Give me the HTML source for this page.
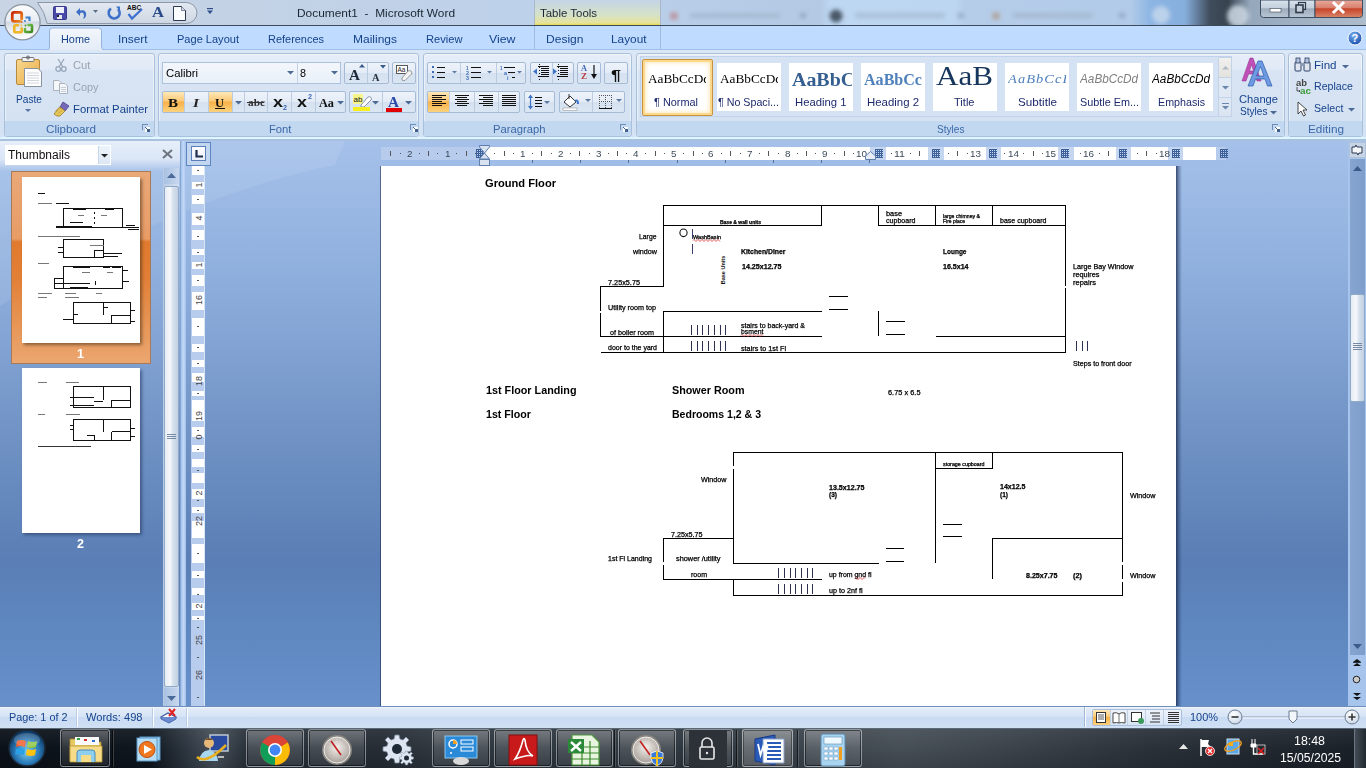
<!DOCTYPE html>
<html><head><meta charset="utf-8"><style>
*{box-sizing:border-box}
html,body{margin:0;padding:0;width:1366px;height:768px;overflow:hidden;position:relative;font-family:"Liberation Sans",sans-serif;background:#6a8fc6}
.a{position:absolute}
.t{position:absolute;white-space:nowrap;transform-origin:0 0}
svg{position:absolute;overflow:visible}
.grp{position:absolute;top:53px;height:84px;border:1px solid #a9c0dc;border-radius:3px;background:linear-gradient(#e5edf8 0,#e1eaf6 15px,#d8e4f3 17px,#d5e2f2 68px);box-shadow:inset 0 0 0 1px rgba(255,255,255,.45)}
.glab{position:absolute;left:0;right:0;bottom:0;height:15px;background:#c2d8f0;border-radius:0 0 3px 3px}
.btnbox{position:absolute;border:1px solid #a6bcd6;border-radius:2px;background:linear-gradient(#eef3fa 0,#e3ebf6 50%,#d5e1f0 51%,#dbe6f3 100%)}
.sel{background:linear-gradient(#fde8b8 0,#fbc977 45%,#f8b048 50%,#fbd27d 100%)}
.sty{position:absolute;top:63px;width:64px;height:48px;background:#fff}
.ln{position:absolute;background:#000}
.tb{position:absolute;top:729px;height:38px;border-radius:3px;border:1px solid rgba(210,220,230,.45);background:linear-gradient(rgba(255,255,255,.3),rgba(255,255,255,.14) 50%,rgba(255,255,255,.08));box-shadow:inset 0 0 0 1px rgba(0,0,0,.5)}

</style></head><body>
<div class="a" style="left:0px;top:0px;width:1366px;height:25px;background:linear-gradient(90deg,#c8d4e3 0px,#c3d2e5 250px,#bdd1ea 520px,#b9cfe9 660px,#b4cae4 820px,#bdd6f1 830px,#bcd5f0 955px,#b5cde9 965px,#b2cbe8 1130px,#8db6e4 1150px,#86aedc 1185px,#3f4c5b 1210px,#37434f 1228px,#95a8bc 1250px,#aebdcc 1366px)"></div>
<svg style="left:0;top:0" width="1366" height="25"><defs><filter id="bl" x="-50%" y="-50%" width="200%" height="200%"><feGaussianBlur stdDeviation="2"/></filter></defs><g filter="url(#bl)"><circle cx="836" cy="16" r="6.5" fill="#4a5868"/><rect x="690" y="13" width="90" height="5" fill="#9fb3ca" opacity=".7"/><rect x="855" y="13" width="90" height="5" fill="#a3b8d0" opacity=".7"/><rect x="1013" y="13" width="80" height="5" fill="#9fb3ca" opacity=".7"/><circle cx="674" cy="16" r="4" fill="#c07070" opacity=".6"/><circle cx="996" cy="16" r="4" fill="#b09070" opacity=".6"/><circle cx="1161" cy="15" r="9" fill="#c8daee" opacity=".8"/><circle cx="1238" cy="16" r="11" fill="#cbd7e3" opacity=".85"/><rect x="800" y="13" width="6" height="5" fill="#7f93aa" opacity=".6"/><rect x="958" y="13" width="6" height="5" fill="#7f93aa" opacity=".6"/><rect x="1119" y="13" width="6" height="5" fill="#7f93aa" opacity=".6"/></g></svg>
<div class="a" style="left:0px;top:25px;width:1366px;height:1px;background:#3c4a5c"></div>
<div class="a" style="left:0px;top:26px;width:1366px;height:24px;background:#bfdbff"></div>
<div class="a" style="left:0px;top:50px;width:1366px;height:89px;background:linear-gradient(#dbe7f5 0,#d3e2f4 100%)"></div>
<div class="a" style="left:0px;top:49px;width:1366px;height:1px;background:#9ebfe6"></div>
<div class="a" style="left:0px;top:137px;width:1366px;height:2px;background:#ddf6ff"></div>
<div class="a" style="left:0px;top:139px;width:1366px;height:2px;background:#a9c1df"></div>
<svg style="left:0;top:0" width="230" height="26"><defs><linearGradient id="qg" x1="0" y1="0" x2="0" y2="1"><stop offset="0" stop-color="#e3e9f1"/><stop offset="1" stop-color="#cdd7e3"/></linearGradient></defs><path d="M37.5 2.5 H186 A11 10.5 0 0 1 186 23.5 H47 Q45 12 37.5 2.5 Z" fill="url(#qg)" stroke="#8c98a8" stroke-width="1"/></svg>
<svg style="left:53px;top:6px" width="14" height="14" viewBox="0 0 14 14"><rect x="0.5" y="0.5" width="13" height="13" rx="1" fill="#4a4aa8" stroke="#3a3a8a"/><rect x="3" y="1" width="8" height="6" fill="#eef0fa"/><rect x="4" y="9" width="5" height="4" fill="#e8e8f0"/><rect x="4" y="9" width="2" height="2" fill="#222"/></svg>
<svg style="left:75px;top:6px" width="14" height="14" viewBox="0 0 14 14"><path d="M1 6 L5 2 L5 4.5 Q12 3 11 10 Q10 13 8 13 Q10 9 8 7 Q7 6 5 7.5 L5 10 Z" fill="#3d6ec4"/></svg>
<svg style="left:93px;top:10px" width="6" height="4"><path d="M0 0 H5 L2.5 3 Z" fill="#5a6e88"/></svg>
<svg style="left:107px;top:6px" width="14" height="14" viewBox="0 0 14 14"><path d="M11 3 A5.5 5.5 0 1 1 4 2.5" fill="none" stroke="#3e71c9" stroke-width="2.6"/><path d="M9 0.5 L13 0.5 L13 5 Z" fill="#3e71c9"/></svg>
<svg style="left:127px;top:4px" width="18" height="16" viewBox="0 0 18 16"><text x="0" y="6" font-family="Liberation Sans" font-weight="bold" font-size="6.5" fill="#111">ABC</text><path d="M1.5 10 L5 14.5 L15 5" fill="none" stroke="#3f6fd0" stroke-width="2.2"/></svg>
<span id="t0" class="t" style="transform:scaleX(1.1852);left:152px;top:6.27px;font-size:14px;line-height:14px;color:#2a4a8a;font-weight:bold;font-family:'Liberation Serif',serif;">A</span>
<svg style="left:173px;top:6px" width="13" height="15" viewBox="0 0 13 15"><path d="M0.5 0.5 H8.5 L12.5 4.5 V14.5 H0.5 Z" fill="#fbfcfe" stroke="#2c3a54"/><path d="M8.5 0.5 V4.5 H12.5" fill="#dde" stroke="#2c3a54" stroke-width=".6"/></svg>
<svg style="left:207px;top:8px" width="6" height="7"><rect x="0" y="0" width="6" height="1.2" fill="#2e4d8a"/><path d="M0 2.5 H6 L3 6 Z" fill="#2e4d8a"/></svg>
<svg style="left:0;top:0" width="48" height="48" viewBox="0 0 48 48"><defs><linearGradient id="ob" x1="0" y1="0" x2="0" y2="1"><stop offset="0" stop-color="#fbfcfd"/><stop offset="0.45" stop-color="#e8edf3"/><stop offset="0.5" stop-color="#d2d9e4"/><stop offset="0.75" stop-color="#eef1f5"/><stop offset="1" stop-color="#ffffff"/></linearGradient><linearGradient id="or" x1="0" y1="0" x2="1" y2="1"><stop offset="0" stop-color="#c82808"/><stop offset="1" stop-color="#f08a1a"/></linearGradient><linearGradient id="gr" x1="0" y1="0" x2="1" y2="1"><stop offset="0" stop-color="#7ac850"/><stop offset="1" stop-color="#3a8a20"/></linearGradient></defs><circle cx="22.5" cy="22.3" r="17.6" fill="url(#ob)" stroke="#8a949f" stroke-width="1.3"/><path d="M19.5 21.3 H14 Q12.3 21.3 12.3 19.6 V14 Q12.3 12.3 14 12.3 H20 Q21.7 12.3 21.7 14 V19" fill="none" stroke="url(#or)" stroke-width="2.8" stroke-linecap="round"/><path d="M25.5 17.5 H29.5 V21" fill="none" stroke="#3a7ec8" stroke-width="2.2"/><circle cx="25" cy="21" r="1" fill="#3a7ec8"/><circle cx="28" cy="18.8" r=".9" fill="#3a7ec8" opacity=".0"/><circle cx="21.5" cy="22" r="1.1" fill="#e06a20"/><path d="M18 25.3 H15.5 Q14.3 25.3 14.3 26.5 V31 Q14.3 32.3 15.5 32.3 H20.5 Q21.7 32.3 21.7 31 V28.5" fill="none" stroke="#f0b428" stroke-width="2.6" stroke-linecap="round"/><circle cx="21.3" cy="25.5" r=".9" fill="#f0c040"/><path d="M25 29 V31.2 Q25 32 26 32 H31 Q32 32 32 31 V26 Q32 25 31 25 H28.5" fill="none" stroke="url(#gr)" stroke-width="2.6" stroke-linecap="round"/><circle cx="25.5" cy="25.5" r="1" fill="#50a030"/></svg>
<span id="t1" class="t" style="transform:scaleX(1.0359);left:297px;top:7.87px;font-size:11.5px;line-height:11.5px;color:#1b2634;font-weight:normal;font-family:'Liberation Sans',sans-serif;">Document1&nbsp; -&nbsp; Microsoft Word</span>
<div class="a" style="left:534px;top:0px;width:127px;height:25px;background:linear-gradient(#c4d4e6 0,#d6e2c8 60%,#e6e39a 92%,#e8d84a 100%);border-left:1px solid #a9b8c9;border-right:1px solid #a9b8c9"></div>
<span id="t2" class="t" style="transform:scaleX(0.9943);left:540px;top:7.87px;font-size:11.5px;line-height:11.5px;color:#1b2634;font-weight:normal;font-family:'Liberation Sans',sans-serif;">Table Tools</span>
<div class="a" style="left:534px;top:26px;width:1px;height:23px;background:#9fbce0"></div>
<div class="a" style="left:660px;top:26px;width:1px;height:23px;background:#9fbce0"></div>
<svg style="left:1260px;top:0" width="106" height="20" viewBox="0 0 106 20"><defs><linearGradient id="wg" x1="0" y1="0" x2="0" y2="1"><stop offset="0" stop-color="#d9e2ec"/><stop offset="0.45" stop-color="#c4d0dd"/><stop offset="0.5" stop-color="#9eacbc"/><stop offset="1" stop-color="#b9c6d4"/></linearGradient><linearGradient id="cg" x1="0" y1="0" x2="0" y2="1"><stop offset="0" stop-color="#e9a99c"/><stop offset="0.45" stop-color="#d9806d"/><stop offset="0.5" stop-color="#c7432a"/><stop offset="1" stop-color="#d8866a"/></linearGradient></defs><path d="M0.5 0 V14.5 Q0.5 17.5 3.5 17.5 H29 V0 Z" fill="url(#wg)" stroke="#3e4e62"/><path d="M29 0 V17.5 H55 V0 Z" fill="url(#wg)" stroke="#3e4e62"/><path d="M55 0 V17.5 H99.5 Q102.5 17.5 102.5 14.5 V0 Z" fill="url(#cg)" stroke="#3e4e62"/><rect x="10" y="8.5" width="11" height="3.5" fill="#fff" stroke="#3a4656" stroke-width=".6"/><rect x="38.5" y="2.5" width="7" height="7" fill="none" stroke="#2f3b4a" stroke-width="1.2"/><rect x="36" y="5" width="7" height="7.5" fill="#c6d0dc" stroke="#2f3b4a" stroke-width="1.6"/><path d="M74 3 L83 12 M83 3 L74 12" stroke="#fff" stroke-width="3" stroke-linecap="square"/></svg>
<svg style="left:47px;top:27px" width="58" height="24"><defs><linearGradient id="htab" x1="0" y1="0" x2="0" y2="1"><stop offset="0" stop-color="#f3f7fc"/><stop offset="1" stop-color="#e4ecf7"/></linearGradient></defs><path d="M1.5 23 Q2.5 22 2.5 19 V4 Q2.5 1 5.5 1 H51.5 Q54.5 1 54.5 4 V19 Q54.5 22 56.5 23" fill="url(#htab)" stroke="#94b3dc"/></svg>
<span id="t3" class="t" style="transform:scaleX(0.9883);left:61px;top:34.29px;font-size:11px;line-height:11px;color:#15428b;font-weight:normal;font-family:'Liberation Sans',sans-serif;">Home</span>
<span id="t4" class="t" style="transform:scaleX(1.0721);left:117.5px;top:34.29px;font-size:11px;line-height:11px;color:#15428b;font-weight:normal;font-family:'Liberation Sans',sans-serif;">Insert</span>
<span id="t5" class="t" style="transform:scaleX(1.0035);left:177px;top:34.29px;font-size:11px;line-height:11px;color:#15428b;font-weight:normal;font-family:'Liberation Sans',sans-serif;">Page Layout</span>
<span id="t6" class="t" style="transform:scaleX(0.9953);left:268px;top:34.29px;font-size:11px;line-height:11px;color:#15428b;font-weight:normal;font-family:'Liberation Sans',sans-serif;">References</span>
<span id="t7" class="t" style="transform:scaleX(1.0902);left:353px;top:34.29px;font-size:11px;line-height:11px;color:#15428b;font-weight:normal;font-family:'Liberation Sans',sans-serif;">Mailings</span>
<span id="t8" class="t" style="transform:scaleX(1.0117);left:426px;top:34.29px;font-size:11px;line-height:11px;color:#15428b;font-weight:normal;font-family:'Liberation Sans',sans-serif;">Review</span>
<span id="t9" class="t" style="transform:scaleX(1.1202);left:489px;top:34.29px;font-size:11px;line-height:11px;color:#15428b;font-weight:normal;font-family:'Liberation Sans',sans-serif;">View</span>
<span id="t10" class="t" style="transform:scaleX(1.0949);left:546px;top:34.29px;font-size:11px;line-height:11px;color:#15428b;font-weight:normal;font-family:'Liberation Sans',sans-serif;">Design</span>
<span id="t11" class="t" style="transform:scaleX(1.0747);left:611px;top:34.29px;font-size:11px;line-height:11px;color:#15428b;font-weight:normal;font-family:'Liberation Sans',sans-serif;">Layout</span>
<svg style="left:1347px;top:30px" width="16" height="16" viewBox="0 0 16 16"><defs><radialGradient id="hg" cx=".4" cy=".3" r=".7"><stop offset="0" stop-color="#7ab0f0"/><stop offset="1" stop-color="#1a4fae"/></radialGradient></defs><circle cx="8" cy="8" r="7" fill="url(#hg)" stroke="#fff" stroke-width="1"/><text x="4.6" y="12.3" font-family="Liberation Sans" font-weight="bold" font-size="11" fill="#fff">?</text></svg>
<div class="grp" style="left:4px;width:151px"><div class="glab"></div></div>
<div class="grp" style="left:158px;width:261px"><div class="glab"></div></div>
<div class="grp" style="left:423px;width:209px"><div class="glab"></div></div>
<div class="grp" style="left:636px;width:649px"><div class="glab"></div></div>
<div class="grp" style="left:1288px;width:75px"><div class="glab"></div></div>
<span id="t12" class="t" style="transform:scaleX(1.0617);left:45.7px;top:124.09px;font-size:11px;line-height:11px;color:#3c68a8;font-weight:normal;font-family:'Liberation Sans',sans-serif;">Clipboard</span>
<span id="t13" class="t" style="transform:scaleX(1.0220);left:269px;top:124.09px;font-size:11px;line-height:11px;color:#3c68a8;font-weight:normal;font-family:'Liberation Sans',sans-serif;">Font</span>
<span id="t14" class="t" style="transform:scaleX(1.0219);left:492.5px;top:124.09px;font-size:11px;line-height:11px;color:#3c68a8;font-weight:normal;font-family:'Liberation Sans',sans-serif;">Paragraph</span>
<span id="t15" class="t" style="transform:scaleX(0.9176);left:937px;top:124.09px;font-size:11px;line-height:11px;color:#3c68a8;font-weight:normal;font-family:'Liberation Sans',sans-serif;">Styles</span>
<span id="t16" class="t" style="transform:scaleX(1.0701);left:1307.5px;top:124.09px;font-size:11px;line-height:11px;color:#3c68a8;font-weight:normal;font-family:'Liberation Sans',sans-serif;">Editing</span>
<svg style="left:142px;top:124px" width="9" height="9" viewBox="0 0 9 9" shape-rendering="crispEdges"><path d="M.5 6 V.5 H6" fill="none" stroke="#6f8db5"/><rect x="3" y="3" width="5" height="5" fill="#fff"/><path d="M3.5 3.5 L7 7" stroke="#3f5f8c"/><rect x="5" y="5" width="3" height="3" fill="#3f5f8c"/></svg>
<svg style="left:410px;top:124px" width="9" height="9" viewBox="0 0 9 9" shape-rendering="crispEdges"><path d="M.5 6 V.5 H6" fill="none" stroke="#6f8db5"/><rect x="3" y="3" width="5" height="5" fill="#fff"/><path d="M3.5 3.5 L7 7" stroke="#3f5f8c"/><rect x="5" y="5" width="3" height="3" fill="#3f5f8c"/></svg>
<svg style="left:620px;top:124px" width="9" height="9" viewBox="0 0 9 9" shape-rendering="crispEdges"><path d="M.5 6 V.5 H6" fill="none" stroke="#6f8db5"/><rect x="3" y="3" width="5" height="5" fill="#fff"/><path d="M3.5 3.5 L7 7" stroke="#3f5f8c"/><rect x="5" y="5" width="3" height="3" fill="#3f5f8c"/></svg>
<svg style="left:1272px;top:124px" width="9" height="9" viewBox="0 0 9 9" shape-rendering="crispEdges"><path d="M.5 6 V.5 H6" fill="none" stroke="#6f8db5"/><rect x="3" y="3" width="5" height="5" fill="#fff"/><path d="M3.5 3.5 L7 7" stroke="#3f5f8c"/><rect x="5" y="5" width="3" height="3" fill="#3f5f8c"/></svg>
<svg style="left:15px;top:56px" width="30" height="32" viewBox="0 0 30 32"><defs><linearGradient id="cb" x1="0" y1="0" x2="1" y2="1"><stop offset="0" stop-color="#f8d890"/><stop offset="1" stop-color="#e9ac44"/></linearGradient></defs><rect x="1.5" y="3.5" width="23" height="25" rx="1.5" fill="url(#cb)" stroke="#b88a3e"/><rect x="7" y="1.5" width="12" height="4" rx="1" fill="#f4f4f4" stroke="#777"/><circle cx="13" cy="1.5" r="1.5" fill="none" stroke="#666"/><path d="M9.5 12.5 H23 L26.5 16 V30.5 H9.5 Z" fill="#fdfdfd" stroke="#8a94a0"/><path d="M12 17 H24 M12 19.5 H24 M12 22 H24 M12 24.5 H24 M12 27 H24" stroke="#c5ccd6" stroke-width=".8"/></svg>
<span id="t17" class="t" style="transform:scaleX(0.9239);left:15.8px;top:94.29px;font-size:11px;line-height:11px;color:#15428b;font-weight:normal;font-family:'Liberation Sans',sans-serif;">Paste</span>
<svg style="left:25px;top:109px" width="7" height="4"><path d="M0 0 H6 L3 3 Z" fill="#5874a0"/></svg>
<svg style="left:55px;top:58px" width="12" height="14" viewBox="0 0 12 14"><path d="M3 1 L8 9 M9 1 L4 9" stroke="#98a6bb" stroke-width="1.3"/><circle cx="3.2" cy="11" r="2.3" fill="none" stroke="#98a6bb" stroke-width="1.3"/><circle cx="8.8" cy="11" r="2.3" fill="none" stroke="#98a6bb" stroke-width="1.3"/></svg>
<span id="t18" class="t" style="transform:scaleX(1.0219);left:72.7px;top:60.29px;font-size:11px;line-height:11px;color:#9aa3b0;font-weight:normal;font-family:'Liberation Sans',sans-serif;">Cut</span>
<svg style="left:53px;top:80px" width="16" height="14" viewBox="0 0 16 14"><path d="M0.5 0.5 H6 L8 2.5 V10.5 H0.5 Z" fill="#f6f7f9" stroke="#a9b2bf"/><path d="M6.5 3.5 H12 L14.5 6 V13.5 H6.5 Z" fill="#f6f7f9" stroke="#a9b2bf"/><path d="M8 7.5 H13 M8 9.5 H13 M8 11.5 H13" stroke="#b8c0cc" stroke-width=".8"/></svg>
<span id="t19" class="t" style="transform:scaleX(0.9927);left:72.7px;top:82.49px;font-size:11px;line-height:11px;color:#9aa3b0;font-weight:normal;font-family:'Liberation Sans',sans-serif;">Copy</span>
<svg style="left:53px;top:101px" width="17" height="16" viewBox="0 0 17 16"><path d="M10 1 L16 5 L12 10 L7 6 Z" fill="#7668b8" stroke="#4d4088" stroke-width=".8"/><path d="M7 6 L12 10 L7 15 Q4 16 1 13 Q3 11 3.5 9 Z" fill="#e8c85a" stroke="#9a7a2a" stroke-width=".8"/><path d="M3 11 L8 7 M4.5 13 L9.5 9" stroke="#b89838" stroke-width=".7"/></svg>
<span id="t20" class="t" style="transform:scaleX(1.0309);left:72.7px;top:104.19px;font-size:11px;line-height:11px;color:#15428b;font-weight:normal;font-family:'Liberation Sans',sans-serif;">Format Painter</span>
<div class="a" style="left:162px;top:62px;width:179px;height:22px;border:1px solid #abc1de;background:linear-gradient(#f3f7fc,#e9f0f9)"></div>
<div class="a" style="left:297px;top:63px;width:1px;height:20px;background:#c3d3e8"></div>
<span id="t21" class="t" style="transform:scaleX(1.0261);left:165.8px;top:67.59px;font-size:11px;line-height:11px;color:#000;font-weight:normal;font-family:'Liberation Sans',sans-serif;">Calibri</span>
<span id="t22" class="t" style="transform:scaleX(0.9796);left:300.4px;top:67.59px;font-size:11px;line-height:11px;color:#000;font-weight:normal;font-family:'Liberation Sans',sans-serif;">8</span>
<svg style="left:287px;top:71px" width="7" height="4"><path d="M0 0 H7 L3.5 3.5 Z" fill="#4d6a94"/></svg>
<svg style="left:331px;top:71px" width="7" height="4"><path d="M0 0 H7 L3.5 3.5 Z" fill="#4d6a94"/></svg>
<div class="btnbox" style="left:344px;top:62px;width:45px;height:22px"></div>
<div class="a" style="left:367px;top:63px;width:1px;height:20px;background:#b9cbe2"></div>
<span id="t23" class="t" style="transform:scaleX(1.0144);left:349px;top:68.44px;font-size:15px;line-height:15px;color:#1f2a3a;font-weight:bold;font-family:'Liberation Serif',serif;">A</span>
<svg style="left:359px;top:64px" width="6" height="4"><path d="M0 3.5 H6 L3 0 Z" fill="#3a5a8c"/></svg>
<span id="t24" class="t" style="transform:scaleX(1.0367);left:372px;top:72.62px;font-size:10px;line-height:10px;color:#1f2a3a;font-weight:bold;font-family:'Liberation Serif',serif;">A</span>
<svg style="left:380px;top:65px" width="6" height="4"><path d="M0 0 H6 L3 3.5 Z" fill="#3a5a8c"/></svg>
<div class="btnbox" style="left:392px;top:62px;width:24px;height:22px"></div>
<svg style="left:395px;top:65px" width="18" height="16" viewBox="0 0 18 16"><rect x="1.5" y="0.5" width="11" height="8" fill="#fff" stroke="#333" stroke-width=".8"/><text x="2.5" y="7" font-family="Liberation Sans" font-size="6.5" fill="#222">Aa</text><path d="M7 13 L13 6 Q15 5 16.5 6.5 Q17.5 8 16 9.5 L10 15.5 Q8 16 7 15 Z" fill="#f4f4f4" stroke="#8a8a8a" stroke-width=".9"/></svg>
<div class="btnbox" style="left:162px;top:91px;width:184px;height:22px"></div>
<div class="a sel" style="left:163px;top:92px;width:21px;height:20px"></div>
<div class="a sel" style="left:209px;top:92px;width:23px;height:20px"></div>
<div class="a" style="left:184px;top:92px;width:1px;height:20px;background:#bccde2"></div>
<div class="a" style="left:208px;top:92px;width:1px;height:20px;background:#bccde2"></div>
<div class="a" style="left:232px;top:92px;width:1px;height:20px;background:#bccde2"></div>
<div class="a" style="left:244px;top:92px;width:1px;height:20px;background:#bccde2"></div>
<div class="a" style="left:267px;top:92px;width:1px;height:20px;background:#bccde2"></div>
<div class="a" style="left:291px;top:92px;width:1px;height:20px;background:#bccde2"></div>
<div class="a" style="left:315px;top:92px;width:1px;height:20px;background:#bccde2"></div>
<span id="t25" class="t" style="transform:scaleX(1.1532);left:168px;top:96.11px;font-size:13px;line-height:13px;color:#111;font-weight:bold;font-family:'Liberation Serif',serif;">B</span>
<span id="t26" class="t" style="transform:scaleX(1.1852);left:193px;top:96.11px;font-size:13px;line-height:13px;color:#222;font-weight:bold;font-family:'Liberation Serif',serif;font-style:italic;">I</span>
<span id="t27" class="t" style="transform:scaleX(1.0378);left:215px;top:96.95px;font-size:12px;line-height:12px;color:#111;font-weight:bold;font-family:'Liberation Serif',serif;">U</span>
<div class="a" style="left:215px;top:108px;width:10px;height:1px;background:#111"></div>
<svg style="left:235px;top:101px" width="7" height="4"><path d="M0 0 H7 L3.5 3.5 Z" fill="#4d6a94"/></svg>
<span id="t28" class="t" style="transform:scaleX(1.0303);left:247.5px;top:96.79px;font-size:11px;line-height:11px;color:#333;font-weight:bold;font-family:'Liberation Serif',serif;">abc</span>
<div class="a" style="left:247px;top:102px;width:17px;height:1px;background:#333"></div>
<span id="t29" class="t" style="transform:scaleX(1.2826);left:273px;top:95.15px;font-size:14px;line-height:14px;color:#111;font-weight:bold;font-family:'Liberation Sans',sans-serif;">x</span>
<span id="t30" class="t" style="transform:scaleX(1.0240);left:283px;top:103.57px;font-size:7px;line-height:7px;color:#3a63b8;font-weight:bold;font-family:'Liberation Sans',sans-serif;">2</span>
<span id="t31" class="t" style="transform:scaleX(1.2826);left:297px;top:95.15px;font-size:14px;line-height:14px;color:#111;font-weight:bold;font-family:'Liberation Sans',sans-serif;">x</span>
<span id="t32" class="t" style="transform:scaleX(1.0240);left:308px;top:93.07px;font-size:7px;line-height:7px;color:#3a63b8;font-weight:bold;font-family:'Liberation Sans',sans-serif;">2</span>
<span id="t33" class="t" style="transform:scaleX(0.9440);left:319px;top:96.11px;font-size:13px;line-height:13px;color:#111;font-weight:bold;font-family:'Liberation Serif',serif;">Aa</span>
<svg style="left:337px;top:101px" width="7" height="4"><path d="M0 0 H7 L3.5 3.5 Z" fill="#4d6a94"/></svg>
<div class="btnbox" style="left:349px;top:91px;width:67px;height:22px"></div>
<div class="a" style="left:382px;top:92px;width:1px;height:20px;background:#bccde2"></div>
<svg style="left:352px;top:93px" width="22" height="18" viewBox="0 0 22 18"><rect x="1" y="1" width="10" height="10" fill="#f5f58a"/><text x="1.5" y="9" font-family="Liberation Sans" font-size="8" fill="#111">ab</text><path d="M9 12 L16 4 Q18 3 19 4.5 Q20 6 19 7 L12 14 L9 14 Z" fill="#fff" stroke="#7a8aa0" stroke-width=".9"/><rect x="1" y="14" width="17" height="4" fill="#f6ef20"/></svg>
<svg style="left:372px;top:101px" width="7" height="4"><path d="M0 0 H7 L3.5 3.5 Z" fill="#4d6a94"/></svg>
<span id="t34" class="t" style="transform:scaleX(1.0144);left:388px;top:95.44px;font-size:15px;line-height:15px;color:#2a4aa8;font-weight:bold;font-family:'Liberation Serif',serif;">A</span>
<div class="a" style="left:386px;top:108px;width:16px;height:4px;background:#e00000"></div>
<svg style="left:405px;top:101px" width="7" height="4"><path d="M0 0 H7 L3.5 3.5 Z" fill="#4d6a94"/></svg>
<div class="btnbox" style="left:427px;top:62px;width:99px;height:22px"></div>
<div class="a" style="left:460px;top:63px;width:1px;height:20px;background:#bccde2"></div>
<div class="a" style="left:496px;top:63px;width:1px;height:20px;background:#bccde2"></div>
<svg style="left:427px;top:62px" width="100" height="22" viewBox="0 0 100 22" shape-rendering="crispEdges"><rect x="5" y="4" width="2" height="2" fill="#3a6ab8"/><rect x="5" y="9" width="2" height="2" fill="#3a6ab8"/><rect x="5" y="14" width="2" height="2" fill="#3a6ab8"/><path d="M10 5.5 H18 M10 10.5 H18 M10 15.5 H18" stroke="#111" stroke-width="1"/><path d="M25 9 H30 L27.5 11.5 Z" fill="#5d7aa6" shape-rendering="auto"/><path d="M44 5.5 H54 M44 10.5 H54 M44 15.5 H54" stroke="#111" stroke-width="1"/><path d="M60 9 H65 L62.5 11.5 Z" fill="#5d7aa6" shape-rendering="auto"/><path d="M77 5.5 H88 M81 10.5 H88 M85 15.5 H88" stroke="#111" stroke-width="1"/><path d="M90 9 H95 L92.5 11.5 Z" fill="#5d7aa6" shape-rendering="auto"/></svg>
<span id="t35" class="t" style="transform:scaleX(0.8989);left:466px;top:65.77px;font-size:5px;line-height:5px;color:#3a6ab8;font-weight:bold;font-family:'Liberation Sans',sans-serif;">1</span>
<span id="t36" class="t" style="transform:scaleX(0.8989);left:500px;top:65.77px;font-size:5px;line-height:5px;color:#3a6ab8;font-weight:bold;font-family:'Liberation Sans',sans-serif;">1</span>
<span id="t37" class="t" style="transform:scaleX(1.0787);left:503.5px;top:70.77px;font-size:5px;line-height:5px;color:#3a6ab8;font-weight:bold;font-family:'Liberation Sans',sans-serif;">a</span>
<span id="t38" class="t" style="transform:scaleX(1.0787);left:507px;top:75.77px;font-size:5px;line-height:5px;color:#3a6ab8;font-weight:bold;font-family:'Liberation Sans',sans-serif;">i</span>
<span id="t39" class="t" style="transform:scaleX(1.0787);left:465.7px;top:70.77px;font-size:5px;line-height:5px;color:#3a6ab8;font-weight:bold;font-family:'Liberation Sans',sans-serif;">2</span>
<span id="t40" class="t" style="transform:scaleX(1.0787);left:465.7px;top:75.77px;font-size:5px;line-height:5px;color:#3a6ab8;font-weight:bold;font-family:'Liberation Sans',sans-serif;">3</span>
<div class="btnbox" style="left:530px;top:62px;width:44px;height:22px"></div>
<div class="a" style="left:552px;top:63px;width:1px;height:20px;background:#bccde2"></div>
<svg style="left:532px;top:64px" width="40" height="18" viewBox="0 0 40 18"><path d="M6 2.5 H17 M9 4.5 H17 M9 6.5 H17 M9 8.5 H17 M9 10.5 H17 M6 12.5 H17" stroke="#111" stroke-width="1"/><path d="M1 7.5 L5 4.5 V10.5 Z" fill="#3d74c8"/><path d="M7.5 0 V16" stroke="#111" stroke-dasharray="1 2" stroke-width="1"/><path d="M25 2.5 H36 M28 4.5 H36 M28 6.5 H36 M28 8.5 H36 M28 10.5 H36 M25 12.5 H36" stroke="#111" stroke-width="1"/><path d="M25 7.5 L21 4.5 V10.5 Z" fill="#3d74c8"/><path d="M26.5 0 V16" stroke="#111" stroke-dasharray="1 2" stroke-width="1"/></svg>
<div class="btnbox" style="left:577px;top:62px;width:24px;height:22px"></div>
<span id="t41" class="t" style="transform:scaleX(1.0378);left:581px;top:65.30px;font-size:8px;line-height:8px;color:#3a66b4;font-weight:bold;font-family:'Liberation Serif',serif;">A</span>
<span id="t42" class="t" style="transform:scaleX(1.1228);left:581px;top:72.80px;font-size:8px;line-height:8px;color:#b83a3a;font-weight:bold;font-family:'Liberation Serif',serif;">Z</span>
<svg style="left:590px;top:64px" width="8" height="16"><path d="M4 1 V13" stroke="#111" stroke-width="1.2"/><path d="M1 10 L4 15 L7 10 Z" fill="#111"/></svg>
<div class="btnbox" style="left:604px;top:62px;width:24px;height:22px"></div>
<span id="t43" class="t" style="transform:scaleX(1.2826);left:611px;top:68.15px;font-size:14px;line-height:14px;color:#111;font-weight:bold;font-family:'Liberation Sans',sans-serif;">¶</span>
<div class="btnbox" style="left:427px;top:91px;width:93px;height:22px"></div>
<div class="a sel" style="left:428px;top:92px;width:21px;height:20px"></div>
<div class="a" style="left:449px;top:92px;width:1px;height:20px;background:#bccde2"></div>
<div class="a" style="left:474px;top:92px;width:1px;height:20px;background:#bccde2"></div>
<div class="a" style="left:498px;top:92px;width:1px;height:20px;background:#bccde2"></div>
<svg style="left:431px;top:95px" width="86" height="12" viewBox="0 0 86 12"><path d="M1 .5 H15 M1 2.5 H11 M1 4.5 H15 M1 6.5 H11 M1 8.5 H15 M1 10.5 H11" stroke="#111" stroke-width="1"/><path d="M24 .5 H38 M26 2.5 H36 M24 4.5 H38 M26 6.5 H36 M24 8.5 H38 M26 10.5 H36" stroke="#111" stroke-width="1"/><path d="M48 .5 H62 M52 2.5 H62 M48 4.5 H62 M52 6.5 H62 M48 8.5 H62 M52 10.5 H62" stroke="#111" stroke-width="1"/><path d="M71 .5 H85 M71 2.5 H85 M71 4.5 H85 M71 6.5 H85 M71 8.5 H85 M71 10.5 H85" stroke="#111" stroke-width="1"/></svg>
<div class="btnbox" style="left:524px;top:91px;width:31px;height:22px"></div>
<svg style="left:527px;top:93px" width="24" height="18" viewBox="0 0 24 18"><path d="M3.5 3 V15" stroke="#3d74c8" stroke-width="1.2"/><path d="M1 5 L3.5 1.5 L6 5 Z M1 13 L3.5 16.5 L6 13 Z" fill="#3d74c8"/><path d="M8 4.5 H15 M8 7.5 H15 M8 10.5 H15 M8 13.5 H15" stroke="#111" stroke-width="1"/><path d="M17 8 H23 L20 11 Z" fill="#5d7aa6"/></svg>
<div class="btnbox" style="left:559px;top:91px;width:66px;height:22px"></div>
<div class="a" style="left:592px;top:92px;width:1px;height:20px;background:#bccde2"></div>
<svg style="left:561px;top:93px" width="62" height="18" viewBox="0 0 62 18"><path d="M3 9 L9 3 L15 9 L9 14 Z" fill="#fff" stroke="#333" stroke-width="1"/><path d="M14 8 Q17 6 17 11" stroke="#3d74c8" stroke-width="2" fill="none"/><rect x="2" y="15" width="14" height="2.5" fill="#fff" stroke="#999" stroke-width=".6"/><path d="M8 1 V6" stroke="#333"/><path d="M24 6 H30 L27 9 Z" fill="#5d7aa6"/><g shape-rendering="crispEdges" stroke="#555" stroke-width="1" stroke-dasharray="1 1" fill="none"><path d="M38 2.5 H50 M38 8.5 H50 M38.5 2 V15 M44.5 2 V15 M50.5 2 V15"/></g><path d="M38 15.5 H51" stroke="#111" stroke-width="1" shape-rendering="crispEdges"/><path d="M55 6 H61 L58 9 Z" fill="#5d7aa6"/></svg>
<div class="a" style="left:640px;top:56px;width:592px;height:61px;background:#d4e2f3;border:1px solid #c0d3ea"></div>
<div class="a" style="left:642px;top:59px;width:71px;height:57px;border:1px solid #c8923a;border-radius:2px;background:#fff;box-shadow:inset 0 0 0 2px #fbd88c,inset 0 0 4px 3px #fde9bd"></div>
<div class="sty" style="left:717px"></div>
<div class="sty" style="left:789px"></div>
<div class="sty" style="left:861px"></div>
<div class="sty" style="left:933px"></div>
<div class="sty" style="left:1005px"></div>
<div class="sty" style="left:1077px"></div>
<div class="sty" style="left:1149px"></div>
<div class="a" style="left:648px;top:60px;width:58px;height:40px;overflow:hidden"><span id="t44" class="t" style="transform:scaleX(1.0630);left:0;top:12.53px;font-size:12.5px;line-height:12.5px;color:#000;font-weight:normal;font-family:'Liberation Serif',serif;letter-spacing:0px">AaBbCcDd</span></div>
<div class="a" style="left:720px;top:60px;width:58px;height:40px;overflow:hidden"><span id="t45" class="t" style="transform:scaleX(1.0630);left:0;top:12.53px;font-size:12.5px;line-height:12.5px;color:#000;font-weight:normal;font-family:'Liberation Serif',serif;letter-spacing:0px">AaBbCcDd</span></div>
<div class="a" style="left:792px;top:60px;width:60px;height:40px;overflow:hidden"><span id="t46" class="t" style="transform:scaleX(1.1074);left:0;top:10.72px;font-size:18px;line-height:18px;color:#365f91;font-weight:bold;font-family:'Liberation Serif',serif;letter-spacing:0px">AaBbCc</span></div>
<div class="a" style="left:864px;top:60px;width:58px;height:40px;overflow:hidden"><span id="t47" class="t" style="transform:scaleX(1.0038);left:0;top:11.60px;font-size:16px;line-height:16px;color:#4f81bd;font-weight:bold;font-family:'Liberation Serif',serif;letter-spacing:0px">AaBbCc</span></div>
<div class="a" style="left:936px;top:60px;width:58px;height:40px;overflow:hidden"><span id="t48" class="t" style="transform:scaleX(1.1515);left:0;top:3.19px;font-size:27px;line-height:27px;color:#17365d;font-weight:normal;font-family:'Liberation Serif',serif;letter-spacing:0px">AaB</span></div>
<div class="a" style="left:1008px;top:60px;width:58px;height:40px;overflow:hidden"><span id="t49" class="t" style="transform:scaleX(1.0688);left:0;top:12.09px;font-size:13.5px;line-height:13.5px;color:#4f81bd;font-weight:normal;font-family:'Liberation Serif',serif;font-style:italic;letter-spacing:1px">AaBbCcD</span></div>
<div class="a" style="left:1080px;top:60px;width:58px;height:40px;overflow:hidden"><span id="t50" class="t" style="transform:scaleX(0.9796);left:0;top:13.24px;font-size:12px;line-height:12px;color:#808080;font-weight:normal;font-family:'Liberation Sans',sans-serif;font-style:italic;letter-spacing:0px">AaBbCcDdE</span></div>
<div class="a" style="left:1152px;top:60px;width:58px;height:40px;overflow:hidden"><span id="t51" class="t" style="transform:scaleX(0.9796);left:0;top:13.24px;font-size:12px;line-height:12px;color:#000;font-weight:normal;font-family:'Liberation Sans',sans-serif;font-style:italic;letter-spacing:0px">AaBbCcDdE</span></div>
<span id="t52" class="t" style="transform:scaleX(0.9905);left:654.2px;top:96.59px;font-size:11px;line-height:11px;color:#1e2a6e;font-weight:normal;font-family:'Liberation Sans',sans-serif;">¶ Normal</span>
<span id="t53" class="t" style="transform:scaleX(0.9716);left:718px;top:96.59px;font-size:11px;line-height:11px;color:#1e2a6e;font-weight:normal;font-family:'Liberation Sans',sans-serif;">¶ No Spaci...</span>
<span id="t54" class="t" style="transform:scaleX(1.0268);left:794.5px;top:96.69px;font-size:11px;line-height:11px;color:#1e2a6e;font-weight:normal;font-family:'Liberation Sans',sans-serif;">Heading 1</span>
<span id="t55" class="t" style="transform:scaleX(1.0368);left:866.6px;top:96.69px;font-size:11px;line-height:11px;color:#1e2a6e;font-weight:normal;font-family:'Liberation Sans',sans-serif;">Heading 2</span>
<span id="t56" class="t" style="transform:scaleX(1.0061);left:954.2px;top:96.69px;font-size:11px;line-height:11px;color:#1e2a6e;font-weight:normal;font-family:'Liberation Sans',sans-serif;">Title</span>
<span id="t57" class="t" style="transform:scaleX(1.0626);left:1017.5px;top:96.69px;font-size:11px;line-height:11px;color:#1e2a6e;font-weight:normal;font-family:'Liberation Sans',sans-serif;">Subtitle</span>
<span id="t58" class="t" style="transform:scaleX(0.9846);left:1079.5px;top:96.69px;font-size:11px;line-height:11px;color:#1e2a6e;font-weight:normal;font-family:'Liberation Sans',sans-serif;">Subtle Em...</span>
<span id="t59" class="t" style="transform:scaleX(0.9731);left:1157.7px;top:96.69px;font-size:11px;line-height:11px;color:#1e2a6e;font-weight:normal;font-family:'Liberation Sans',sans-serif;">Emphasis</span>
<div class="a" style="left:1218px;top:57px;width:14px;height:60px;border:1px solid #c2d3e8;border-radius:2px;background:linear-gradient(#e6edf6,#dbe5f2)"></div>
<div class="a" style="left:1219px;top:58px;width:12px;height:19px;background:linear-gradient(#f0f0ee,#e4e2de)"></div>
<div class="a" style="left:1219px;top:77px;width:12px;height:1px;background:#c2d3e8"></div>
<div class="a" style="left:1219px;top:97px;width:12px;height:1px;background:#c2d3e8"></div>
<svg style="left:1222px;top:66px" width="7" height="4"><path d="M0 3.5 H7 L3.5 0 Z" fill="#b0b8c4"/></svg>
<svg style="left:1222px;top:86px" width="7" height="4"><path d="M0 0 H7 L3.5 3.5 Z" fill="#6b86ad"/></svg>
<svg style="left:1222px;top:103px" width="7" height="7"><rect x="0" y="0" width="7" height="1" fill="#6b86ad"/><path d="M0 3 H7 L3.5 6.5 Z" fill="#6b86ad"/></svg>
<svg style="left:1241px;top:57px" width="34" height="30" viewBox="0 0 34 30"><path d="M1 24 L9 1 L12 1 L20 24 L16 24 L13.5 17 H7.5 L5 24 Z M8.5 14 H12.5 L10.5 7.5 Z" fill="#c050b8" stroke="#8a2a88" stroke-width=".5"/><path d="M7 29 L17 4 L21 4 L31 29 L26.5 29 L24 22 H14.5 L12 29 Z M15.5 19 H23 L19.5 9.5 Z" fill="#6d9ae0" stroke="#2a5aae" stroke-width=".7"/></svg>
<span id="t60" class="t" style="transform:scaleX(1.0118);left:1238.7px;top:93.69px;font-size:11px;line-height:11px;color:#15428b;font-weight:normal;font-family:'Liberation Sans',sans-serif;">Change</span>
<span id="t61" class="t" style="transform:scaleX(0.9176);left:1239.8px;top:106.29px;font-size:11px;line-height:11px;color:#15428b;font-weight:normal;font-family:'Liberation Sans',sans-serif;">Styles</span>
<svg style="left:1270px;top:111px" width="7" height="4"><path d="M0 0 H7 L3.5 3.5 Z" fill="#4d6a94"/></svg>
<svg style="left:1294px;top:57px" width="17" height="15" viewBox="0 0 17 15"><rect x="1" y="5" width="6" height="9" rx="1" fill="#dfe6f0" stroke="#2c3f66"/><rect x="10" y="5" width="6" height="9" rx="1" fill="#dfe6f0" stroke="#2c3f66"/><rect x="2" y="1" width="4" height="5" fill="#b5c4dc" stroke="#2c3f66" stroke-width=".8"/><rect x="11" y="1" width="4" height="5" fill="#b5c4dc" stroke="#2c3f66" stroke-width=".8"/><rect x="6" y="6" width="5" height="3" fill="#8a9ab4"/></svg>
<span id="t62" class="t" style="transform:scaleX(1.0511);left:1314.4px;top:59.69px;font-size:11px;line-height:11px;color:#15428b;font-weight:normal;font-family:'Liberation Sans',sans-serif;">Find</span>
<svg style="left:1342px;top:65px" width="7" height="4"><path d="M0 0 H7 L3.5 3.5 Z" fill="#4d6a94"/></svg>
<span id="t63" class="t" style="transform:scaleX(1.1087);left:1296px;top:79.30px;font-size:8.5px;line-height:8.5px;color:#444;font-weight:bold;font-family:'Liberation Sans',sans-serif;">ab</span>
<span id="t64" class="t" style="transform:scaleX(1.1617);left:1300px;top:86.80px;font-size:8.5px;line-height:8.5px;color:#3a9a3a;font-weight:bold;font-family:'Liberation Sans',sans-serif;">ac</span>
<svg style="left:1296px;top:87px" width="5" height="6"><path d="M1 0 V4 H4 M3 3 L4 4 L3 5" fill="none" stroke="#444" stroke-width=".9"/></svg>
<span id="t65" class="t" style="transform:scaleX(0.9663);left:1314.4px;top:81.09px;font-size:11px;line-height:11px;color:#15428b;font-weight:normal;font-family:'Liberation Sans',sans-serif;">Replace</span>
<svg style="left:1297px;top:101px" width="11" height="16" viewBox="0 0 11 16"><path d="M1 1 V13 L4 10 L6.5 15 L8.5 14 L6 9 H10 Z" fill="#fff" stroke="#333" stroke-width=".9"/></svg>
<span id="t66" class="t" style="transform:scaleX(0.9647);left:1314.4px;top:103.49px;font-size:11px;line-height:11px;color:#15428b;font-weight:normal;font-family:'Liberation Sans',sans-serif;">Select</span>
<svg style="left:1348px;top:108px" width="7" height="4"><path d="M0 0 H7 L3.5 3.5 Z" fill="#4d6a94"/></svg>
<div class="a" style="left:0px;top:141px;width:1366px;height:565px;background:linear-gradient(#a5c1ea 0px,#8aabda 160px,#7193c5 290px,#5a7eb5 420px,#6089c2 500px,#6891cc 565px)"></div>
<svg style="left:0;top:141px" width="1366" height="565"><path d="M0 0 H345 L335 24 Q230 45 120 100 Q40 140 0 165 Z" fill="#ffffff" opacity=".09"/></svg>
<div class="a" style="left:0px;top:141px;width:180px;height:30px;background:linear-gradient(#e6eefa 0,#dbe6f6 60%,rgba(200,218,242,.0) 100%)"></div>
<div class="a" style="left:5px;top:145px;width:106px;height:20px;background:#fff"></div>
<div class="a" style="left:98px;top:146px;width:12px;height:18px;background:linear-gradient(#eef3fa,#dde7f4);border-left:1px solid #c5d5ea"></div>
<svg style="left:101px;top:154px" width="7" height="4"><path d="M0 0 H7 L3.5 3.5 Z" fill="#222"/></svg>
<span id="t67" class="t" style="transform:scaleX(0.9995);left:7.7px;top:148.74px;font-size:12px;line-height:12px;color:#111;font-weight:normal;font-family:'Liberation Sans',sans-serif;">Thumbnails</span>
<svg style="left:162px;top:149px" width="11" height="10" viewBox="0 0 11 10"><path d="M1 1 L10 9 M10 1 L1 9" stroke="#6d7480" stroke-width="2"/></svg>
<div class="a" style="left:180px;top:141px;width:6px;height:565px;background:linear-gradient(90deg,#9bb9e4,#b4cff3 40%,#c2d8f7 60%,#a3c0ea)"></div>
<div class="a" style="left:180px;top:141px;width:1px;height:565px;background:#87a6d2"></div>
<div class="a" style="left:163px;top:168px;width:16px;height:538px;background:linear-gradient(90deg,#b9cbe3,#d5e1f0)"></div>
<div class="a" style="left:164px;top:168px;width:15px;height:16px;background:linear-gradient(90deg,#a9c1e2,#c8d8ee)"></div>
<svg style="left:167px;top:173px" width="9" height="5"><path d="M0 5 H9 L4.5 0 Z" fill="#4a6a9a"/></svg>
<div class="a" style="left:164px;top:186px;width:15px;height:501px;border:1px solid #8fa9c8;border-radius:2px;background:linear-gradient(90deg,#e6ecf4 0,#f6f8fb 40%,#d8e2ee 60%,#c2d0e2 100%)"></div>
<svg style="left:167px;top:434px" width="9" height="6"><path d="M0 .5 H9 M0 2.5 H9 M0 4.5 H9" stroke="#6a7f9c" stroke-width=".9"/></svg>
<div class="a" style="left:164px;top:688px;width:15px;height:18px;background:linear-gradient(90deg,#a9c1e2,#c8d8ee)"></div>
<svg style="left:167px;top:696px" width="9" height="5"><path d="M0 0 H9 L4.5 5 Z" fill="#4a6a9a"/></svg>
<div class="a" style="left:11px;top:171px;width:140px;height:193px;background:linear-gradient(#eaa878 0,#e89c66 35%,#e07a2e 36.5%,#e27f36 55%,#e69454 78%,#eba670 100%);border:1px solid #a87a58"></div>
<div class="a" style="left:22px;top:177px;width:118px;height:166px;background:#fff;box-shadow:2px 2px 3px rgba(60,40,20,.55)"></div>
<span id="t68" class="t" style="transform:scaleX(1.0467);left:76.5px;top:347.84px;font-size:12px;line-height:12px;color:#fff;font-weight:bold;font-family:'Liberation Sans',sans-serif;">1</span>
<div class="a" style="left:22px;top:368px;width:118px;height:165px;background:#fff;box-shadow:2px 2px 3px rgba(30,50,90,.55)"></div>
<span id="t69" class="t" style="transform:scaleX(1.0467);left:76.5px;top:537.84px;font-size:12px;line-height:12px;color:#fff;font-weight:bold;font-family:'Liberation Sans',sans-serif;">2</span>
<div class="a" style="left:186px;top:142px;width:25px;height:24px;background:#c3d6f0;border:1px solid #5e86c2"></div>
<div class="a" style="left:191px;top:146px;width:15px;height:15px;background:linear-gradient(#fff,#e8eef8);border:1px solid #5a7fb8"></div>
<svg style="left:195px;top:150px" width="8" height="8"><path d="M1.5 0 V6.5 H8" fill="none" stroke="#1e2e4e" stroke-width="2.2"/></svg>
<div class="a" style="left:191px;top:166px;width:14px;height:540px;background:#b8cdee"></div>
<div class="a" style="left:192px;top:166px;width:12px;height:9px;background:#fff"></div>
<div class="a" style="left:192px;top:182px;width:12px;height:7px;background:#fff"></div>
<div class="a" style="left:192px;top:195px;width:12px;height:9px;background:#fff"></div>
<div class="a" style="left:192px;top:213px;width:12px;height:12px;background:#fff"></div>
<div class="a" style="left:192px;top:230px;width:12px;height:10px;background:#fff"></div>
<div class="a" style="left:192px;top:249px;width:12px;height:6px;background:#fff"></div>
<div class="a" style="left:192px;top:262px;width:12px;height:7px;background:#fff"></div>
<div class="a" style="left:192px;top:275px;width:12px;height:11px;background:#fff"></div>
<div class="a" style="left:192px;top:292px;width:12px;height:18px;background:#fff"></div>
<div class="a" style="left:192px;top:318px;width:12px;height:18px;background:#fff"></div>
<div class="a" style="left:192px;top:344px;width:12px;height:8px;background:#fff"></div>
<div class="a" style="left:192px;top:360px;width:12px;height:7px;background:#fff"></div>
<div class="a" style="left:192px;top:373px;width:12px;height:9px;background:#fff"></div>
<div class="a" style="left:192px;top:391px;width:12px;height:5px;background:#fff"></div>
<div class="a" style="left:192px;top:400px;width:12px;height:21px;background:#fff"></div>
<div class="a" style="left:192px;top:427px;width:12px;height:10px;background:#fff"></div>
<div class="a" style="left:192px;top:445px;width:12px;height:7px;background:#fff"></div>
<div class="a" style="left:192px;top:459px;width:12px;height:8px;background:#fff"></div>
<div class="a" style="left:192px;top:473px;width:12px;height:10px;background:#fff"></div>
<div class="a" style="left:192px;top:489px;width:12px;height:10px;background:#fff"></div>
<div class="a" style="left:192px;top:507px;width:12px;height:6px;background:#fff"></div>
<div class="a" style="left:192px;top:521px;width:12px;height:17px;background:#fff"></div>
<div class="a" style="left:192px;top:544px;width:12px;height:19px;background:#fff"></div>
<div class="a" style="left:192px;top:571px;width:12px;height:7px;background:#fff"></div>
<div class="a" style="left:192px;top:588px;width:12px;height:7px;background:#fff"></div>
<div class="a" style="left:192px;top:603px;width:12px;height:7px;background:#fff"></div>
<div class="a" style="left:192px;top:616px;width:12px;height:4px;background:#fff"></div>
<div class="a" style="left:204px;top:166px;width:1px;height:540px;background:#d9e6f6"></div>
<div class="a" style="left:192px;top:179px;width:12px;height:12px;"><span class="t" style="left:1px;top:0;font-size:9px;line-height:12px;color:#444;transform:rotate(-90deg);transform-origin:50% 50%;width:12px;text-align:center">1</span></div>
<div class="a" style="left:192px;top:212px;width:12px;height:12px;"><span class="t" style="left:1px;top:0;font-size:9px;line-height:12px;color:#444;transform:rotate(-90deg);transform-origin:50% 50%;width:12px;text-align:center">4</span></div>
<div class="a" style="left:192px;top:259px;width:12px;height:12px;"><span class="t" style="left:1px;top:0;font-size:9px;line-height:12px;color:#444;transform:rotate(-90deg);transform-origin:50% 50%;width:12px;text-align:center">1</span></div>
<div class="a" style="left:192px;top:294px;width:12px;height:12px;"><span class="t" style="left:1px;top:0;font-size:9px;line-height:12px;color:#444;transform:rotate(-90deg);transform-origin:50% 50%;width:12px;text-align:center">16</span></div>
<div class="a" style="left:192px;top:375px;width:12px;height:12px;"><span class="t" style="left:1px;top:0;font-size:9px;line-height:12px;color:#444;transform:rotate(-90deg);transform-origin:50% 50%;width:12px;text-align:center">18</span></div>
<div class="a" style="left:192px;top:410px;width:12px;height:12px;"><span class="t" style="left:1px;top:0;font-size:9px;line-height:12px;color:#444;transform:rotate(-90deg);transform-origin:50% 50%;width:12px;text-align:center">19</span></div>
<div class="a" style="left:192px;top:431px;width:12px;height:12px;"><span class="t" style="left:1px;top:0;font-size:9px;line-height:12px;color:#444;transform:rotate(-90deg);transform-origin:50% 50%;width:12px;text-align:center">0</span></div>
<div class="a" style="left:192px;top:487px;width:12px;height:12px;"><span class="t" style="left:1px;top:0;font-size:9px;line-height:12px;color:#444;transform:rotate(-90deg);transform-origin:50% 50%;width:12px;text-align:center">2</span></div>
<div class="a" style="left:192px;top:515px;width:12px;height:12px;"><span class="t" style="left:1px;top:0;font-size:9px;line-height:12px;color:#444;transform:rotate(-90deg);transform-origin:50% 50%;width:12px;text-align:center">22</span></div>
<div class="a" style="left:192px;top:600px;width:12px;height:12px;"><span class="t" style="left:1px;top:0;font-size:9px;line-height:12px;color:#444;transform:rotate(-90deg);transform-origin:50% 50%;width:12px;text-align:center">2</span></div>
<div class="a" style="left:192px;top:634px;width:12px;height:12px;"><span class="t" style="left:1px;top:0;font-size:9px;line-height:12px;color:#444;transform:rotate(-90deg);transform-origin:50% 50%;width:12px;text-align:center">25</span></div>
<div class="a" style="left:192px;top:669px;width:12px;height:12px;"><span class="t" style="left:1px;top:0;font-size:9px;line-height:12px;color:#444;transform:rotate(-90deg);transform-origin:50% 50%;width:12px;text-align:center">26</span></div>
<div class="a" style="left:197px;top:170px;width:2px;height:1px;background:#555"></div>
<div class="a" style="left:197px;top:199px;width:2px;height:1px;background:#555"></div>
<div class="a" style="left:197px;top:236px;width:2px;height:1px;background:#555"></div>
<div class="a" style="left:197px;top:252px;width:2px;height:1px;background:#555"></div>
<div class="a" style="left:197px;top:280px;width:2px;height:1px;background:#555"></div>
<div class="a" style="left:197px;top:326px;width:2px;height:1px;background:#555"></div>
<div class="a" style="left:197px;top:347px;width:2px;height:1px;background:#555"></div>
<div class="a" style="left:197px;top:363px;width:2px;height:1px;background:#555"></div>
<div class="a" style="left:197px;top:393px;width:2px;height:1px;background:#555"></div>
<div class="a" style="left:197px;top:430px;width:2px;height:1px;background:#555"></div>
<div class="a" style="left:197px;top:449px;width:2px;height:1px;background:#555"></div>
<div class="a" style="left:197px;top:470px;width:2px;height:1px;background:#555"></div>
<div class="a" style="left:197px;top:500px;width:2px;height:1px;background:#555"></div>
<div class="a" style="left:197px;top:510px;width:2px;height:1px;background:#555"></div>
<div class="a" style="left:197px;top:553px;width:2px;height:1px;background:#555"></div>
<div class="a" style="left:197px;top:575px;width:2px;height:1px;background:#555"></div>
<div class="a" style="left:197px;top:594px;width:2px;height:1px;background:#555"></div>
<div class="a" style="left:197px;top:618px;width:2px;height:1px;background:#555"></div>
<div class="a" style="left:197px;top:627px;width:2px;height:1px;background:#555"></div>
<div class="a" style="left:197px;top:657px;width:2px;height:1px;background:#555"></div>
<div class="a" style="left:197px;top:697px;width:2px;height:1px;background:#555"></div>
<div class="a" style="left:1176px;top:166px;width:6px;height:540px;background:linear-gradient(90deg,rgba(20,35,70,.75),rgba(30,50,90,.35) 50%,rgba(30,50,90,0))"></div>
<div class="a" style="left:380px;top:166px;width:1px;height:540px;background:rgba(30,45,75,.6)"></div>
<div class="a" style="left:381px;top:166px;width:795px;height:540px;background:#fff"></div>
<div class="a" style="left:381px;top:147px;width:845px;height:13px;background:#b7ccec"></div>
<div class="a" style="left:484px;top:147px;width:732px;height:13px;background:#fff"></div>
<div class="a" style="left:870px;top:147px;width:16px;height:13px;background:#c4d6f0"></div>
<div class="a" style="left:928px;top:147px;width:16px;height:13px;background:#c4d6f0"></div>
<div class="a" style="left:986px;top:147px;width:15px;height:13px;background:#c4d6f0"></div>
<div class="a" style="left:1058px;top:147px;width:16px;height:13px;background:#c4d6f0"></div>
<div class="a" style="left:1116px;top:147px;width:15px;height:13px;background:#c4d6f0"></div>
<div class="a" style="left:1168px;top:147px;width:15px;height:13px;background:#c4d6f0"></div>
<div class="a" style="left:381px;top:160px;width:845px;height:6px;background:#a0bde8"></div>
<div class="a" style="left:532px;top:160px;width:1px;height:3px;background:#5a6f8e"></div>
<div class="a" style="left:580px;top:160px;width:1px;height:3px;background:#5a6f8e"></div>
<div class="a" style="left:628px;top:160px;width:1px;height:3px;background:#5a6f8e"></div>
<div class="a" style="left:677px;top:160px;width:1px;height:3px;background:#5a6f8e"></div>
<div class="a" style="left:725px;top:160px;width:1px;height:3px;background:#5a6f8e"></div>
<div class="a" style="left:773px;top:160px;width:1px;height:3px;background:#5a6f8e"></div>
<div class="a" style="left:821px;top:160px;width:1px;height:3px;background:#5a6f8e"></div>
<div class="a" style="left:869px;top:160px;width:1px;height:3px;background:#5a6f8e"></div>
<svg style="left:476px;top:149px" width="8" height="9" viewBox="0 0 8 9"><path d="M0 .5 H8 M0 2.5 H8 M0 4.5 H8 M0 6.5 H8 M0 8.5 H8 M.5 0 V9 M2.5 0 V9 M4.5 0 V9 M6.5 0 V9" stroke="#3d5f9a" stroke-width="1"/></svg>
<svg style="left:875px;top:149px" width="8" height="9" viewBox="0 0 8 9"><path d="M0 .5 H8 M0 2.5 H8 M0 4.5 H8 M0 6.5 H8 M0 8.5 H8 M.5 0 V9 M2.5 0 V9 M4.5 0 V9 M6.5 0 V9" stroke="#3d5f9a" stroke-width="1"/></svg>
<svg style="left:932px;top:149px" width="8" height="9" viewBox="0 0 8 9"><path d="M0 .5 H8 M0 2.5 H8 M0 4.5 H8 M0 6.5 H8 M0 8.5 H8 M.5 0 V9 M2.5 0 V9 M4.5 0 V9 M6.5 0 V9" stroke="#3d5f9a" stroke-width="1"/></svg>
<svg style="left:989px;top:149px" width="8" height="9" viewBox="0 0 8 9"><path d="M0 .5 H8 M0 2.5 H8 M0 4.5 H8 M0 6.5 H8 M0 8.5 H8 M.5 0 V9 M2.5 0 V9 M4.5 0 V9 M6.5 0 V9" stroke="#3d5f9a" stroke-width="1"/></svg>
<svg style="left:1061px;top:149px" width="8" height="9" viewBox="0 0 8 9"><path d="M0 .5 H8 M0 2.5 H8 M0 4.5 H8 M0 6.5 H8 M0 8.5 H8 M.5 0 V9 M2.5 0 V9 M4.5 0 V9 M6.5 0 V9" stroke="#3d5f9a" stroke-width="1"/></svg>
<svg style="left:1119px;top:149px" width="8" height="9" viewBox="0 0 8 9"><path d="M0 .5 H8 M0 2.5 H8 M0 4.5 H8 M0 6.5 H8 M0 8.5 H8 M.5 0 V9 M2.5 0 V9 M4.5 0 V9 M6.5 0 V9" stroke="#3d5f9a" stroke-width="1"/></svg>
<svg style="left:1172px;top:149px" width="8" height="9" viewBox="0 0 8 9"><path d="M0 .5 H8 M0 2.5 H8 M0 4.5 H8 M0 6.5 H8 M0 8.5 H8 M.5 0 V9 M2.5 0 V9 M4.5 0 V9 M6.5 0 V9" stroke="#3d5f9a" stroke-width="1"/></svg>
<svg style="left:1220px;top:149px" width="8" height="9" viewBox="0 0 8 9"><path d="M0 .5 H8 M0 2.5 H8 M0 4.5 H8 M0 6.5 H8 M0 8.5 H8 M.5 0 V9 M2.5 0 V9 M4.5 0 V9 M6.5 0 V9" stroke="#3d5f9a" stroke-width="1"/></svg>
<span id="t70" class="t" style="transform:scaleX(1.0383);left:519.75px;top:148.96px;font-size:9.5px;line-height:9.5px;color:#3d4a5c;font-weight:normal;font-family:'Liberation Sans',sans-serif;">1</span>
<span id="t71" class="t" style="transform:scaleX(1.0383);left:557.55px;top:148.96px;font-size:9.5px;line-height:9.5px;color:#3d4a5c;font-weight:normal;font-family:'Liberation Sans',sans-serif;">2</span>
<span id="t72" class="t" style="transform:scaleX(1.0383);left:595.85px;top:148.96px;font-size:9.5px;line-height:9.5px;color:#3d4a5c;font-weight:normal;font-family:'Liberation Sans',sans-serif;">3</span>
<span id="t73" class="t" style="transform:scaleX(1.0383);left:632.85px;top:148.96px;font-size:9.5px;line-height:9.5px;color:#3d4a5c;font-weight:normal;font-family:'Liberation Sans',sans-serif;">4</span>
<span id="t74" class="t" style="transform:scaleX(1.0383);left:670.85px;top:148.96px;font-size:9.5px;line-height:9.5px;color:#3d4a5c;font-weight:normal;font-family:'Liberation Sans',sans-serif;">5</span>
<span id="t75" class="t" style="transform:scaleX(1.0383);left:708.25px;top:148.96px;font-size:9.5px;line-height:9.5px;color:#3d4a5c;font-weight:normal;font-family:'Liberation Sans',sans-serif;">6</span>
<span id="t76" class="t" style="transform:scaleX(1.0383);left:746.65px;top:148.96px;font-size:9.5px;line-height:9.5px;color:#3d4a5c;font-weight:normal;font-family:'Liberation Sans',sans-serif;">7</span>
<span id="t77" class="t" style="transform:scaleX(1.0383);left:784.55px;top:148.96px;font-size:9.5px;line-height:9.5px;color:#3d4a5c;font-weight:normal;font-family:'Liberation Sans',sans-serif;">8</span>
<span id="t78" class="t" style="transform:scaleX(1.0383);left:821.65px;top:148.96px;font-size:9.5px;line-height:9.5px;color:#3d4a5c;font-weight:normal;font-family:'Liberation Sans',sans-serif;">9</span>
<span id="t79" class="t" style="transform:scaleX(1.0399);left:856.3px;top:148.96px;font-size:9.5px;line-height:9.5px;color:#3d4a5c;font-weight:normal;font-family:'Liberation Sans',sans-serif;">10</span>
<span id="t80" class="t" style="transform:scaleX(1.1139);left:894.1px;top:148.96px;font-size:9.5px;line-height:9.5px;color:#3d4a5c;font-weight:normal;font-family:'Liberation Sans',sans-serif;">11</span>
<span id="t81" class="t" style="transform:scaleX(1.0399);left:969.7px;top:148.96px;font-size:9.5px;line-height:9.5px;color:#3d4a5c;font-weight:normal;font-family:'Liberation Sans',sans-serif;">13</span>
<span id="t82" class="t" style="transform:scaleX(1.0399);left:1007.5px;top:148.96px;font-size:9.5px;line-height:9.5px;color:#3d4a5c;font-weight:normal;font-family:'Liberation Sans',sans-serif;">14</span>
<span id="t83" class="t" style="transform:scaleX(1.0399);left:1045.3px;top:148.96px;font-size:9.5px;line-height:9.5px;color:#3d4a5c;font-weight:normal;font-family:'Liberation Sans',sans-serif;">15</span>
<span id="t84" class="t" style="transform:scaleX(1.0399);left:1083.1px;top:148.96px;font-size:9.5px;line-height:9.5px;color:#3d4a5c;font-weight:normal;font-family:'Liberation Sans',sans-serif;">16</span>
<span id="t85" class="t" style="transform:scaleX(1.0399);left:1158.7px;top:148.96px;font-size:9.5px;line-height:9.5px;color:#3d4a5c;font-weight:normal;font-family:'Liberation Sans',sans-serif;">18</span>
<span id="t86" class="t" style="transform:scaleX(1.0383);left:444.5px;top:148.96px;font-size:9.5px;line-height:9.5px;color:#3d4a5c;font-weight:normal;font-family:'Liberation Sans',sans-serif;">1</span>
<span id="t87" class="t" style="transform:scaleX(1.0383);left:406.5px;top:148.96px;font-size:9.5px;line-height:9.5px;color:#3d4a5c;font-weight:normal;font-family:'Liberation Sans',sans-serif;">2</span>
<div class="a" style="left:390px;top:151px;width:1px;height:5px;background:#555"></div>
<div class="a" style="left:400px;top:153px;width:1px;height:1px;background:#555"></div>
<div class="a" style="left:419px;top:153px;width:1px;height:1px;background:#555"></div>
<div class="a" style="left:428px;top:151px;width:1px;height:5px;background:#555"></div>
<div class="a" style="left:437px;top:153px;width:1px;height:1px;background:#555"></div>
<div class="a" style="left:456px;top:153px;width:1px;height:1px;background:#555"></div>
<div class="a" style="left:466px;top:151px;width:1px;height:5px;background:#555"></div>
<div class="a" style="left:475px;top:153px;width:1px;height:1px;background:#555"></div>
<div class="a" style="left:494px;top:153px;width:1px;height:1px;background:#555"></div>
<div class="a" style="left:504px;top:151px;width:1px;height:5px;background:#555"></div>
<div class="a" style="left:513px;top:153px;width:1px;height:1px;background:#555"></div>
<div class="a" style="left:532px;top:153px;width:1px;height:1px;background:#555"></div>
<div class="a" style="left:541px;top:151px;width:1px;height:5px;background:#555"></div>
<div class="a" style="left:551px;top:153px;width:1px;height:1px;background:#555"></div>
<div class="a" style="left:570px;top:153px;width:1px;height:1px;background:#555"></div>
<div class="a" style="left:579px;top:151px;width:1px;height:5px;background:#555"></div>
<div class="a" style="left:589px;top:153px;width:1px;height:1px;background:#555"></div>
<div class="a" style="left:608px;top:153px;width:1px;height:1px;background:#555"></div>
<div class="a" style="left:617px;top:151px;width:1px;height:5px;background:#555"></div>
<div class="a" style="left:626px;top:153px;width:1px;height:1px;background:#555"></div>
<div class="a" style="left:645px;top:153px;width:1px;height:1px;background:#555"></div>
<div class="a" style="left:655px;top:151px;width:1px;height:5px;background:#555"></div>
<div class="a" style="left:664px;top:153px;width:1px;height:1px;background:#555"></div>
<div class="a" style="left:683px;top:153px;width:1px;height:1px;background:#555"></div>
<div class="a" style="left:693px;top:151px;width:1px;height:5px;background:#555"></div>
<div class="a" style="left:702px;top:153px;width:1px;height:1px;background:#555"></div>
<div class="a" style="left:721px;top:153px;width:1px;height:1px;background:#555"></div>
<div class="a" style="left:730px;top:151px;width:1px;height:5px;background:#555"></div>
<div class="a" style="left:740px;top:153px;width:1px;height:1px;background:#555"></div>
<div class="a" style="left:759px;top:153px;width:1px;height:1px;background:#555"></div>
<div class="a" style="left:768px;top:151px;width:1px;height:5px;background:#555"></div>
<div class="a" style="left:778px;top:153px;width:1px;height:1px;background:#555"></div>
<div class="a" style="left:797px;top:153px;width:1px;height:1px;background:#555"></div>
<div class="a" style="left:806px;top:151px;width:1px;height:5px;background:#555"></div>
<div class="a" style="left:815px;top:153px;width:1px;height:1px;background:#555"></div>
<div class="a" style="left:834px;top:153px;width:1px;height:1px;background:#555"></div>
<div class="a" style="left:844px;top:151px;width:1px;height:5px;background:#555"></div>
<div class="a" style="left:853px;top:153px;width:1px;height:1px;background:#555"></div>
<div class="a" style="left:891px;top:153px;width:1px;height:1px;background:#555"></div>
<div class="a" style="left:910px;top:153px;width:1px;height:1px;background:#555"></div>
<div class="a" style="left:919px;top:151px;width:1px;height:5px;background:#555"></div>
<div class="a" style="left:948px;top:153px;width:1px;height:1px;background:#555"></div>
<svg style="left:478px;top:145px" width="13" height="22" viewBox="0 0 13 22"><path d="M1.5 .5 H11.5 V2 L6.5 8 L1.5 2 Z" fill="#d8e2f0" stroke="#5f7fae"/><path d="M6.5 8 L11.5 14 H1.5 Z" fill="#d8e2f0" stroke="#5f7fae"/><rect x="1.5" y="14.5" width="10" height="6" fill="#d8e2f0" stroke="#5f7fae"/></svg>
<svg style="left:865px;top:151px" width="11" height="9" viewBox="0 0 11 9"><path d="M5.5 .5 L10.5 5 V8.5 H.5 V5 Z" fill="#e6edf6" stroke="#5f7fae"/></svg>
<div class="a" style="left:1348px;top:141px;width:18px;height:565px;background:#a7c4ec"></div>
<div class="a" style="left:1349px;top:142px;width:17px;height:16px;background:#c7d4e6;border:1px solid #b0c2da"></div>
<svg style="left:1351px;top:144px" width="13" height="12" viewBox="0 0 13 12"><path d="M1 3 H4 L5 1 L6 3 H11 V9 H8 L7 11 L6 9 H1 Z" fill="#f4f6fa" stroke="#2a3a52" stroke-width="1"/></svg>
<div class="a" style="left:1350px;top:159px;width:15px;height:496px;background:linear-gradient(90deg,#87a5d0,#7e9dcb)"></div>
<svg style="left:1353px;top:166px" width="9" height="5"><path d="M0 5 H9 L4.5 0 Z" fill="#3e5a88"/></svg>
<div class="a" style="left:1350px;top:294px;width:15px;height:108px;border:1px solid #8fa9c8;border-radius:2px;background:linear-gradient(90deg,#e6ecf4 0,#f6f8fb 40%,#d8e2ee 60%,#c2d0e2 100%)"></div>
<svg style="left:1353px;top:343px" width="9" height="7"><path d="M0 .5 H9 M0 2.5 H9 M0 4.5 H9 M0 6.5 H9" stroke="#6a7f9c" stroke-width=".9"/></svg>
<svg style="left:1353px;top:644px" width="9" height="5"><path d="M0 0 H9 L4.5 5 Z" fill="#3e5a88"/></svg>
<svg style="left:1351px;top:659px" width="12" height="44" viewBox="0 0 12 44"><path d="M2 3 L6 0 L10 3 Z M2 7 L6 4 L10 7 Z" fill="#111"/><rect x="2" y="3.2" width="8" height=".8" fill="#111"/><circle cx="5.5" cy="20.5" r="3.3" fill="#ccc" stroke="#222" stroke-width="1"/><path d="M2 34 L6 37 L10 34 Z M2 38 L6 41 L10 38 Z" fill="#111"/></svg>
<div class="a" style="left:957px;top:151px;width:1px;height:5px;background:#555"></div>
<div class="a" style="left:967px;top:153px;width:1px;height:1px;background:#555"></div>
<div class="a" style="left:1004px;top:153px;width:1px;height:1px;background:#555"></div>
<div class="a" style="left:1023px;top:153px;width:1px;height:1px;background:#555"></div>
<div class="a" style="left:1033px;top:151px;width:1px;height:5px;background:#555"></div>
<div class="a" style="left:1042px;top:153px;width:1px;height:1px;background:#555"></div>
<div class="a" style="left:1080px;top:153px;width:1px;height:1px;background:#555"></div>
<div class="a" style="left:1099px;top:153px;width:1px;height:1px;background:#555"></div>
<div class="a" style="left:1108px;top:151px;width:1px;height:5px;background:#555"></div>
<div class="a" style="left:1137px;top:153px;width:1px;height:1px;background:#555"></div>
<div class="a" style="left:1146px;top:151px;width:1px;height:5px;background:#555"></div>
<div class="a" style="left:1156px;top:153px;width:1px;height:1px;background:#555"></div>
<span id="t88" class="t" style="transform:scaleX(0.9664);left:485px;top:177.67px;font-size:11.5px;line-height:11.5px;color:#000;font-weight:bold;font-family:'Liberation Sans',sans-serif;">Ground Floor</span>
<div class="a" style="left:663px;top:205px;width:403px;height:1px;background:#000"></div>
<div class="a" style="left:663px;top:225px;width:159px;height:1px;background:#000"></div>
<div class="a" style="left:821px;top:205px;width:1px;height:21px;background:#000"></div>
<div class="a" style="left:878px;top:225px;width:188px;height:1px;background:#000"></div>
<div class="a" style="left:878px;top:205px;width:1px;height:21px;background:#000"></div>
<div class="a" style="left:935px;top:205px;width:1px;height:21px;background:#000"></div>
<div class="a" style="left:992px;top:205px;width:1px;height:21px;background:#000"></div>
<div class="a" style="left:663px;top:205px;width:1px;height:82px;background:#000"></div>
<div class="a" style="left:1065px;top:205px;width:1px;height:81px;background:#000"></div>
<div class="a" style="left:1065px;top:288px;width:1px;height:65px;background:#000"></div>
<div class="a" style="left:600px;top:286px;width:64px;height:1px;background:#000"></div>
<div class="a" style="left:600px;top:286px;width:1px;height:25px;background:#000"></div>
<div class="a" style="left:600px;top:313px;width:1px;height:24px;background:#000"></div>
<div class="a" style="left:663px;top:311px;width:159px;height:1px;background:#000"></div>
<div class="a" style="left:600px;top:336px;width:222px;height:1px;background:#000"></div>
<div class="a" style="left:663px;top:311px;width:1px;height:42px;background:#000"></div>
<div class="a" style="left:601px;top:352px;width:465px;height:1px;background:#000"></div>
<div class="a" style="left:829px;top:296px;width:19px;height:1px;background:#000"></div>
<div class="a" style="left:829px;top:309px;width:19px;height:1px;background:#000"></div>
<div class="a" style="left:878px;top:311px;width:1px;height:25px;background:#000"></div>
<div class="a" style="left:886px;top:321px;width:19px;height:1px;background:#000"></div>
<div class="a" style="left:886px;top:334px;width:19px;height:1px;background:#000"></div>
<div class="a" style="left:936px;top:336px;width:130px;height:1px;background:#000"></div>
<div class="a" style="left:691px;top:325px;width:1px;height:10px;background:#2e3050"></div>
<div class="a" style="left:691px;top:341px;width:1px;height:10px;background:#2e3050"></div>
<div class="a" style="left:697px;top:325px;width:1px;height:10px;background:#2e3050"></div>
<div class="a" style="left:697px;top:341px;width:1px;height:10px;background:#2e3050"></div>
<div class="a" style="left:702px;top:325px;width:1px;height:10px;background:#2e3050"></div>
<div class="a" style="left:702px;top:341px;width:1px;height:10px;background:#2e3050"></div>
<div class="a" style="left:708px;top:325px;width:1px;height:10px;background:#2e3050"></div>
<div class="a" style="left:708px;top:341px;width:1px;height:10px;background:#2e3050"></div>
<div class="a" style="left:714px;top:325px;width:1px;height:10px;background:#2e3050"></div>
<div class="a" style="left:714px;top:341px;width:1px;height:10px;background:#2e3050"></div>
<div class="a" style="left:720px;top:325px;width:1px;height:10px;background:#2e3050"></div>
<div class="a" style="left:720px;top:341px;width:1px;height:10px;background:#2e3050"></div>
<div class="a" style="left:725px;top:325px;width:1px;height:10px;background:#2e3050"></div>
<div class="a" style="left:725px;top:341px;width:1px;height:10px;background:#2e3050"></div>
<div class="a" style="left:1076px;top:341px;width:1px;height:10px;background:#2e3050"></div>
<div class="a" style="left:1082px;top:341px;width:1px;height:10px;background:#2e3050"></div>
<div class="a" style="left:1087px;top:341px;width:1px;height:10px;background:#2e3050"></div>
<div class="a" style="left:692px;top:229px;width:1px;height:10px;background:#3b3f6b"></div>
<div class="a" style="left:692px;top:244px;width:1px;height:10px;background:#3b3f6b"></div>
<svg style="left:679px;top:228px" width="11" height="11"><ellipse cx="4.5" cy="4.8" rx="3.6" ry="3.8" fill="none" stroke="#111" stroke-width="1.1"/></svg>
<span id="t89" class="t" style="transform:scaleX(0.9773);left:639px;top:233.07px;font-size:7px;line-height:7px;color:#000;font-weight:normal;font-family:'Liberation Sans',sans-serif;-webkit-text-stroke:.25px #000">Large</span>
<span id="t90" class="t" style="transform:scaleX(1.0274);left:633px;top:247.97px;font-size:7px;line-height:7px;color:#000;font-weight:normal;font-family:'Liberation Sans',sans-serif;-webkit-text-stroke:.25px #000">window</span>
<span id="t91" class="t" style="transform:scaleX(1.0407);left:607.9px;top:278.67px;font-size:7px;line-height:7px;color:#000;font-weight:normal;font-family:'Liberation Sans',sans-serif;-webkit-text-stroke:.25px #000">7.25x5.75</span>
<span id="t92" class="t" style="transform:scaleX(1.1151);left:693px;top:234.57px;font-size:5px;line-height:5px;color:#000;font-weight:normal;font-family:'Liberation Sans',sans-serif;-webkit-text-stroke:.25px #000">WashBasin</span>
<svg style="left:693px;top:238.5px" width="29" height="3"><path d="M0 1.5 l1 -1 l1 1 l1 1 l1 -1 l1 -1 l1 1 l1 1 l1 -1 l1 -1 l1 1 l1 1 l1 -1 l1 -1 l1 1 l1 1 l1 -1 l1 -1 l1 1 l1 1 l1 -1 l1 -1 l1 1 l1 1 l1 -1 l1 -1 l1 1 l1 1" fill="none" stroke="#d02020" stroke-width=".8"/></svg>
<span id="t93" class="t" style="transform:scaleX(0.9970);left:720px;top:219.97px;font-size:5px;line-height:5px;color:#000;font-weight:bold;font-family:'Liberation Sans',sans-serif;-webkit-text-stroke:.25px #000">Base &amp; wall units</span>
<div class="a" style="left:717px;top:265px;width:12px;height:12px"><span class="t" style="left:-12px;top:2px;width:36px;font-size:5.5px;line-height:6px;color:#111;font-weight:bold;transform:rotate(-90deg);transform-origin:50% 50%;text-align:center">Base Units</span></div>
<span id="t94" class="t" style="transform:scaleX(0.9777);left:741.2px;top:247.97px;font-size:7px;line-height:7px;color:#000;font-weight:bold;font-family:'Liberation Sans',sans-serif;-webkit-text-stroke:.25px #000">Kitchen/Diner</span>
<span id="t95" class="t" style="transform:scaleX(1.0144);left:741.5px;top:262.67px;font-size:7px;line-height:7px;color:#000;font-weight:bold;font-family:'Liberation Sans',sans-serif;-webkit-text-stroke:.25px #000">14.25x12.75</span>
<span id="t96" class="t" style="transform:scaleX(1.0535);left:886px;top:210.47px;font-size:7px;line-height:7px;color:#000;font-weight:normal;font-family:'Liberation Sans',sans-serif;-webkit-text-stroke:.25px #000">base</span>
<span id="t97" class="t" style="transform:scaleX(1.0102);left:886px;top:217.47px;font-size:7px;line-height:7px;color:#000;font-weight:normal;font-family:'Liberation Sans',sans-serif;-webkit-text-stroke:.25px #000">cupboard</span>
<span id="t98" class="t" style="transform:scaleX(1.0318);left:942.9px;top:213.67px;font-size:5px;line-height:5px;color:#000;font-weight:normal;font-family:'Liberation Sans',sans-serif;-webkit-text-stroke:.25px #000">large chimney &amp;</span>
<span id="t99" class="t" style="transform:scaleX(1.0021);left:942.9px;top:218.57px;font-size:5px;line-height:5px;color:#000;font-weight:normal;font-family:'Liberation Sans',sans-serif;-webkit-text-stroke:.25px #000">Fire place</span>
<span id="t100" class="t" style="transform:scaleX(1.0037);left:1000px;top:217.47px;font-size:7px;line-height:7px;color:#000;font-weight:normal;font-family:'Liberation Sans',sans-serif;-webkit-text-stroke:.25px #000">base cupboard</span>
<span id="t101" class="t" style="transform:scaleX(0.9295);left:943.2px;top:247.97px;font-size:7px;line-height:7px;color:#000;font-weight:bold;font-family:'Liberation Sans',sans-serif;-webkit-text-stroke:.25px #000">Lounge</span>
<span id="t102" class="t" style="transform:scaleX(1.0074);left:943.2px;top:262.87px;font-size:7px;line-height:7px;color:#000;font-weight:bold;font-family:'Liberation Sans',sans-serif;-webkit-text-stroke:.25px #000">16.5x14</span>
<span id="t103" class="t" style="transform:scaleX(1.0295);left:1072.7px;top:262.87px;font-size:7px;line-height:7px;color:#000;font-weight:normal;font-family:'Liberation Sans',sans-serif;-webkit-text-stroke:.25px #000">Large Bay Window</span>
<span id="t104" class="t" style="transform:scaleX(1.0476);left:1072.7px;top:271.07px;font-size:7px;line-height:7px;color:#000;font-weight:normal;font-family:'Liberation Sans',sans-serif;-webkit-text-stroke:.25px #000">requires</span>
<span id="t105" class="t" style="transform:scaleX(1.0745);left:1072.7px;top:278.87px;font-size:7px;line-height:7px;color:#000;font-weight:normal;font-family:'Liberation Sans',sans-serif;-webkit-text-stroke:.25px #000">repairs</span>
<span id="t106" class="t" style="transform:scaleX(1.0281);left:607.9px;top:303.97px;font-size:7px;line-height:7px;color:#000;font-weight:normal;font-family:'Liberation Sans',sans-serif;-webkit-text-stroke:.25px #000">Utility room top</span>
<span id="t107" class="t" style="transform:scaleX(1.0281);left:610px;top:328.57px;font-size:7px;line-height:7px;color:#000;font-weight:normal;font-family:'Liberation Sans',sans-serif;-webkit-text-stroke:.25px #000">of boiler room</span>
<span id="t108" class="t" style="transform:scaleX(0.9994);left:607.9px;top:344.37px;font-size:7px;line-height:7px;color:#000;font-weight:normal;font-family:'Liberation Sans',sans-serif;-webkit-text-stroke:.25px #000">door to the yard</span>
<span id="t109" class="t" style="transform:scaleX(1.0029);left:740.6px;top:321.97px;font-size:7px;line-height:7px;color:#000;font-weight:normal;font-family:'Liberation Sans',sans-serif;-webkit-text-stroke:.25px #000">stairs to back-yard &amp;</span>
<span id="t110" class="t" style="transform:scaleX(0.9796);left:740.6px;top:328.37px;font-size:7px;line-height:7px;color:#000;font-weight:normal;font-family:'Liberation Sans',sans-serif;-webkit-text-stroke:.25px #000">bsment</span>
<svg style="left:741px;top:334px" width="23" height="3"><path d="M0 1.5 l1 -1 l1 1 l1 1 l1 -1 l1 -1 l1 1 l1 1 l1 -1 l1 -1 l1 1 l1 1 l1 -1 l1 -1 l1 1 l1 1 l1 -1 l1 -1 l1 1 l1 1 l1 -1 l1 -1 l1 1" fill="none" stroke="#d02020" stroke-width=".8"/></svg>
<span id="t111" class="t" style="transform:scaleX(1.0326);left:740.6px;top:344.67px;font-size:7px;line-height:7px;color:#000;font-weight:normal;font-family:'Liberation Sans',sans-serif;-webkit-text-stroke:.25px #000">stairs to 1st Fl</span>
<span id="t112" class="t" style="transform:scaleX(1.0157);left:1073px;top:359.87px;font-size:7px;line-height:7px;color:#000;font-weight:normal;font-family:'Liberation Sans',sans-serif;-webkit-text-stroke:.25px #000">Steps to front door</span>
<span id="t113" class="t" style="transform:scaleX(0.9380);left:485.8px;top:384.57px;font-size:11.5px;line-height:11.5px;color:#000;font-weight:bold;font-family:'Liberation Sans',sans-serif;">1st Floor Landing</span>
<span id="t114" class="t" style="transform:scaleX(0.9378);left:672px;top:384.57px;font-size:11.5px;line-height:11.5px;color:#000;font-weight:bold;font-family:'Liberation Sans',sans-serif;">Shower Room</span>
<span id="t115" class="t" style="transform:scaleX(1.0569);left:888.1px;top:389.07px;font-size:7px;line-height:7px;color:#000;font-weight:normal;font-family:'Liberation Sans',sans-serif;-webkit-text-stroke:.25px #000">6.75 x 6.5</span>
<span id="t116" class="t" style="transform:scaleX(0.9266);left:485.8px;top:409.17px;font-size:11.5px;line-height:11.5px;color:#000;font-weight:bold;font-family:'Liberation Sans',sans-serif;">1st Floor</span>
<span id="t117" class="t" style="transform:scaleX(0.9161);left:672px;top:409.17px;font-size:11.5px;line-height:11.5px;color:#000;font-weight:bold;font-family:'Liberation Sans',sans-serif;">Bedrooms 1,2 &amp; 3</span>
<div class="a" style="left:733px;top:452px;width:390px;height:1px;background:#000"></div>
<div class="a" style="left:733px;top:452px;width:1px;height:14px;background:#000"></div>
<div class="a" style="left:733px;top:469px;width:1px;height:95px;background:#000"></div>
<div class="a" style="left:935px;top:468px;width:58px;height:1px;background:#000"></div>
<div class="a" style="left:992px;top:452px;width:1px;height:17px;background:#000"></div>
<div class="a" style="left:935px;top:452px;width:1px;height:111px;background:#000"></div>
<div class="a" style="left:663px;top:538px;width:71px;height:1px;background:#000"></div>
<div class="a" style="left:663px;top:538px;width:1px;height:24px;background:#000"></div>
<div class="a" style="left:663px;top:565px;width:1px;height:15px;background:#000"></div>
<div class="a" style="left:733px;top:563px;width:146px;height:1px;background:#000"></div>
<div class="a" style="left:886px;top:548px;width:18px;height:1px;background:#000"></div>
<div class="a" style="left:886px;top:561px;width:18px;height:1px;background:#000"></div>
<div class="a" style="left:943px;top:524px;width:19px;height:1px;background:#000"></div>
<div class="a" style="left:943px;top:536px;width:19px;height:1px;background:#000"></div>
<div class="a" style="left:992px;top:538px;width:131px;height:1px;background:#000"></div>
<div class="a" style="left:992px;top:538px;width:1px;height:41px;background:#000"></div>
<div class="a" style="left:1122px;top:452px;width:1px;height:110px;background:#000"></div>
<div class="a" style="left:1122px;top:565px;width:1px;height:14px;background:#000"></div>
<div class="a" style="left:1122px;top:582px;width:1px;height:14px;background:#000"></div>
<div class="a" style="left:663px;top:579px;width:159px;height:1px;background:#000"></div>
<div class="a" style="left:733px;top:579px;width:1px;height:17px;background:#000"></div>
<div class="a" style="left:733px;top:595px;width:390px;height:1px;background:#000"></div>
<div class="a" style="left:778px;top:568px;width:1px;height:10px;background:#2e3050"></div>
<div class="a" style="left:778px;top:584px;width:1px;height:10px;background:#2e3050"></div>
<div class="a" style="left:784px;top:568px;width:1px;height:10px;background:#2e3050"></div>
<div class="a" style="left:784px;top:584px;width:1px;height:10px;background:#2e3050"></div>
<div class="a" style="left:790px;top:568px;width:1px;height:10px;background:#2e3050"></div>
<div class="a" style="left:790px;top:584px;width:1px;height:10px;background:#2e3050"></div>
<div class="a" style="left:795px;top:568px;width:1px;height:10px;background:#2e3050"></div>
<div class="a" style="left:795px;top:584px;width:1px;height:10px;background:#2e3050"></div>
<div class="a" style="left:801px;top:568px;width:1px;height:10px;background:#2e3050"></div>
<div class="a" style="left:801px;top:584px;width:1px;height:10px;background:#2e3050"></div>
<div class="a" style="left:807px;top:568px;width:1px;height:10px;background:#2e3050"></div>
<div class="a" style="left:807px;top:584px;width:1px;height:10px;background:#2e3050"></div>
<div class="a" style="left:812px;top:568px;width:1px;height:10px;background:#2e3050"></div>
<div class="a" style="left:812px;top:584px;width:1px;height:10px;background:#2e3050"></div>
<span id="t118" class="t" style="transform:scaleX(1.0238);left:701.2px;top:476.07px;font-size:7px;line-height:7px;color:#000;font-weight:normal;font-family:'Liberation Sans',sans-serif;-webkit-text-stroke:.25px #000">Window</span>
<span id="t119" class="t" style="transform:scaleX(1.0129);left:829.4px;top:483.57px;font-size:7px;line-height:7px;color:#000;font-weight:bold;font-family:'Liberation Sans',sans-serif;-webkit-text-stroke:.25px #000">13.5x12.75</span>
<span id="t120" class="t" style="transform:scaleX(0.9343);left:829.4px;top:491.27px;font-size:7px;line-height:7px;color:#000;font-weight:bold;font-family:'Liberation Sans',sans-serif;-webkit-text-stroke:.25px #000">(3)</span>
<span id="t121" class="t" style="transform:scaleX(1.0244);left:671.3px;top:530.57px;font-size:7px;line-height:7px;color:#000;font-weight:normal;font-family:'Liberation Sans',sans-serif;-webkit-text-stroke:.25px #000">7.25x5.75</span>
<span id="t122" class="t" style="transform:scaleX(1.0004);left:608.2px;top:555.47px;font-size:7px;line-height:7px;color:#000;font-weight:normal;font-family:'Liberation Sans',sans-serif;-webkit-text-stroke:.25px #000">1st Fl Landing</span>
<span id="t123" class="t" style="transform:scaleX(1.0494);left:675.8px;top:555.47px;font-size:7px;line-height:7px;color:#000;font-weight:normal;font-family:'Liberation Sans',sans-serif;-webkit-text-stroke:.25px #000">shower /utility</span>
<span id="t124" class="t" style="transform:scaleX(1.0029);left:691px;top:571.37px;font-size:7px;line-height:7px;color:#000;font-weight:normal;font-family:'Liberation Sans',sans-serif;-webkit-text-stroke:.25px #000">room</span>
<span id="t125" class="t" style="transform:scaleX(0.9927);left:829px;top:571.37px;font-size:7px;line-height:7px;color:#000;font-weight:normal;font-family:'Liberation Sans',sans-serif;-webkit-text-stroke:.25px #000">up from gnd fl</span>
<svg style="left:855px;top:577px" width="10" height="3"><path d="M0 1.5 l1 -1 l1 1 l1 1 l1 -1 l1 -1 l1 1 l1 1 l1 -1 l1 -1 l1 1" fill="none" stroke="#d02020" stroke-width=".8"/></svg>
<span id="t126" class="t" style="transform:scaleX(1.0244);left:829px;top:587.27px;font-size:7px;line-height:7px;color:#000;font-weight:normal;font-family:'Liberation Sans',sans-serif;-webkit-text-stroke:.25px #000">up to 2nf fl</span>
<span id="t127" class="t" style="transform:scaleX(1.0662);left:943.1px;top:461.87px;font-size:5px;line-height:5px;color:#000;font-weight:normal;font-family:'Liberation Sans',sans-serif;-webkit-text-stroke:.25px #000">storage cupboard</span>
<span id="t128" class="t" style="transform:scaleX(1.0074);left:1000.2px;top:483.17px;font-size:7px;line-height:7px;color:#000;font-weight:bold;font-family:'Liberation Sans',sans-serif;-webkit-text-stroke:.25px #000">14x12.5</span>
<span id="t129" class="t" style="transform:scaleX(0.9343);left:1000.2px;top:491.17px;font-size:7px;line-height:7px;color:#000;font-weight:bold;font-family:'Liberation Sans',sans-serif;-webkit-text-stroke:.25px #000">(1)</span>
<span id="t130" class="t" style="transform:scaleX(1.0238);left:1130.2px;top:492.07px;font-size:7px;line-height:7px;color:#000;font-weight:normal;font-family:'Liberation Sans',sans-serif;-webkit-text-stroke:.25px #000">Window</span>
<span id="t131" class="t" style="transform:scaleX(1.0238);left:1130.2px;top:571.77px;font-size:7px;line-height:7px;color:#000;font-weight:normal;font-family:'Liberation Sans',sans-serif;-webkit-text-stroke:.25px #000">Window</span>
<span id="t132" class="t" style="transform:scaleX(1.0110);left:1026.1px;top:571.77px;font-size:7px;line-height:7px;color:#000;font-weight:bold;font-family:'Liberation Sans',sans-serif;-webkit-text-stroke:.25px #000">8.25x7.75</span>
<span id="t133" class="t" style="transform:scaleX(1.0511);left:1072.6px;top:571.77px;font-size:7px;line-height:7px;color:#000;font-weight:bold;font-family:'Liberation Sans',sans-serif;-webkit-text-stroke:.25px #000">(2)</span>
<div class="a" style="left:0px;top:706px;width:1366px;height:22px;background:linear-gradient(#f3f7fc 0,#e2ebf7 8%,#d6e4f6 45%,#c9dbf3 50%,#d0e0f5 100%);border-top:1px solid #6e8fbd"></div>
<span id="t134" class="t" style="transform:scaleX(0.9860);left:8.8px;top:712.19px;font-size:11px;line-height:11px;color:#15428b;font-weight:normal;font-family:'Liberation Sans',sans-serif;">Page: 1 of 2</span>
<div class="a" style="left:76px;top:708px;width:1px;height:19px;background:#b9cde6"></div>
<div class="a" style="left:77px;top:708px;width:1px;height:19px;background:#fff"></div>
<span id="t135" class="t" style="transform:scaleX(1.0078);left:86.4px;top:712.19px;font-size:11px;line-height:11px;color:#15428b;font-weight:normal;font-family:'Liberation Sans',sans-serif;">Words: 498</span>
<div class="a" style="left:152px;top:708px;width:1px;height:19px;background:#b9cde6"></div>
<div class="a" style="left:153px;top:708px;width:1px;height:19px;background:#fff"></div>
<svg style="left:160px;top:708px" width="18" height="15" viewBox="0 0 18 15"><path d="M1 9 L8 5 L16 9 L9 13 Z" fill="#fff" stroke="#3a5aa0" stroke-width="1.2"/><path d="M1 9 V11 L9 15 L16 11 V9" fill="#6a8ad0" stroke="#3a5aa0" stroke-width=".8"/><path d="M9 1 L15 8 M15 1 L9 8" stroke="#e02020" stroke-width="2"/></svg>
<div class="a" style="left:186px;top:708px;width:1px;height:19px;background:#b9cde6"></div>
<div class="a" style="left:187px;top:708px;width:1px;height:19px;background:#fff"></div>
<div class="a" style="left:1084px;top:707px;width:1px;height:20px;background:#9fb6d6"></div>
<div class="a" style="left:1085px;top:707px;width:1px;height:20px;background:#fff"></div>
<div class="a" style="left:1092px;top:709px;width:90px;height:17px;border:1px solid #a9bfdc;border-radius:2px;background:linear-gradient(#eef3fa,#d6e3f3)"></div>
<div class="a sel" style="left:1093px;top:710px;width:17px;height:15px"></div>
<svg style="left:1094px;top:711px" width="88" height="13" viewBox="0 0 88 13"><rect x="2.5" y="1.5" width="9" height="10" fill="#fff" stroke="#333"/><path d="M4 4 H10 M4 6 H10 M4 8 H10" stroke="#333" stroke-width=".8"/><path d="M19 2 Q23 1 25 3 Q27 1 31 2 V12 Q27 11 25 12 Q23 11 19 12 Z" fill="#fff" stroke="#333" stroke-width=".9"/><path d="M25 3 V12" stroke="#333" stroke-width=".7"/><rect x="37.5" y="1.5" width="10" height="9" fill="#fff" stroke="#333"/><circle cx="47" cy="10" r="3" fill="#3a9a5a"/><path d="M56 2 H66 M58 5 H66 M58 8 H66 M56 11 H66" stroke="#333" stroke-width="1"/><path d="M74 1.5 H85 M74 3.5 H85 M74 5.5 H85 M74 7.5 H85 M74 9.5 H85 M74 11.5 H85" stroke="#333" stroke-width="1"/></svg>
<div class="a" style="left:1110px;top:710px;width:1px;height:15px;background:#c0d0e6"></div>
<div class="a" style="left:1127px;top:710px;width:1px;height:15px;background:#c0d0e6"></div>
<div class="a" style="left:1145px;top:710px;width:1px;height:15px;background:#c0d0e6"></div>
<div class="a" style="left:1163px;top:710px;width:1px;height:15px;background:#c0d0e6"></div>
<span id="t136" class="t" style="transform:scaleX(0.9950);left:1190px;top:711.69px;font-size:11px;line-height:11px;color:#15428b;font-weight:normal;font-family:'Liberation Sans',sans-serif;">100%</span>
<svg style="left:1226px;top:708px" width="140" height="18" viewBox="0 0 140 18"><defs><radialGradient id="zg" cx=".4" cy=".3" r=".8"><stop offset="0" stop-color="#fff"/><stop offset="1" stop-color="#c6d4e6"/></radialGradient></defs><circle cx="9" cy="9" r="7" fill="url(#zg)" stroke="#6a7a90"/><path d="M5.5 9 H12.5" stroke="#333" stroke-width="1.6"/><path d="M17 9 H119" stroke="#8fa2bc" stroke-width="1"/><path d="M17 10 H119" stroke="#fff" stroke-width="1"/><path d="M63 3 H71 V11 L67 15 L63 11 Z" fill="#f2f5f9" stroke="#6a7a90"/><circle cx="126" cy="9" r="7" fill="url(#zg)" stroke="#6a7a90"/><path d="M122.5 9 H129.5 M126 5.5 V12.5" stroke="#333" stroke-width="1.6"/></svg>
<div class="a" style="left:0px;top:728px;width:1366px;height:40px;background:linear-gradient(90deg,#0b1118 0,#0f161e 150px,#2c353f 185px,#48515b 215px,#2a323b 245px,#252c34 380px,#2e363e 430px,#30383f 700px,#464e56 900px,#3c444c 1000px,#2a3139 1150px,#1a2028 1366px)"></div>
<div class="a" style="left:0px;top:728px;width:1366px;height:1px;background:#5a6878"></div>
<div class="a" style="left:0;top:729px;width:1366px;height:39px;background:linear-gradient(rgba(255,255,255,.06),rgba(255,255,255,0) 50%,rgba(0,0,0,.15))"></div>
<svg style="left:7px;top:728px" width="40" height="40" viewBox="0 0 40 40"><defs><radialGradient id="so" cx=".5" cy=".6" r=".55"><stop offset="0" stop-color="#7ad0f0"/><stop offset=".6" stop-color="#2a7ab8"/><stop offset="1" stop-color="#0e3a66"/></radialGradient></defs><circle cx="20" cy="20" r="18" fill="url(#so)" stroke="#1a2a3a" stroke-width="1.5"/><path d="M10 13 Q14 11 19 13 L18 19 Q13 17 9 19 Z" fill="#f05a28"/><path d="M21 13 Q26 15 30 13 L29 19 Q25 21 20 19 Z" fill="#8cc63f"/><path d="M9 21 Q13 19 18 21 L17 27 Q12 25 8 27 Z" fill="#2aa0e8"/><path d="M20 21 Q25 23 29 21 L28 27 Q24 29 19 27 Z" fill="#ffc20e"/><ellipse cx="20" cy="12" rx="13" ry="7" fill="#fff" opacity=".18"/></svg>
<div class="tb" style="left:60px;width:50px"></div>
<div class="tb" style="left:246px;width:58px"></div>
<div class="tb" style="left:308px;width:58px"></div>
<div class="tb" style="left:432px;width:58px"></div>
<div class="tb" style="left:494px;width:58px"></div>
<div class="tb" style="left:556px;width:57px"></div>
<div class="tb" style="left:618px;width:58px"></div>
<div class="tb" style="left:683px;width:50px"></div>
<div class="tb" style="left:742px;width:51px"></div>
<div class="tb" style="left:804px;width:58px"></div>
<div class="a" style="left:112px;top:730px;width:1px;height:37px;background:rgba(0,0,0,.6)"></div>
<div class="a" style="left:113px;top:730px;width:1px;height:37px;background:rgba(255,255,255,.18)"></div>
<div class="a" style="left:614px;top:730px;width:1px;height:37px;background:rgba(0,0,0,.6)"></div>
<div class="a" style="left:615px;top:730px;width:1px;height:37px;background:rgba(255,255,255,.18)"></div>
<div class="a" style="left:736px;top:730px;width:1px;height:37px;background:rgba(0,0,0,.6)"></div>
<div class="a" style="left:737px;top:730px;width:1px;height:37px;background:rgba(255,255,255,.18)"></div>
<div class="a" style="left:797px;top:730px;width:1px;height:37px;background:rgba(0,0,0,.6)"></div>
<div class="a" style="left:798px;top:730px;width:1px;height:37px;background:rgba(255,255,255,.18)"></div>
<div class="a" style="left:742px;top:729px;width:51px;height:38px;background:rgba(255,255,255,.12)"></div>
<svg style="left:67px;top:734px" width="38" height="30" viewBox="0 0 38 30"><path d="M3 5 H14 L16 8 H34 V27 H3 Z" fill="#e8c860" stroke="#a88a30" stroke-width=".8"/><rect x="8" y="3" width="24" height="8" fill="#fafafa"/><rect x="10" y="4" width="3" height="2" fill="#30a040"/><rect x="17" y="5" width="3" height="2" fill="#d03030"/><rect x="25" y="6" width="3" height="2" fill="#3070d0"/><path d="M3 12 H35 V28 H3 Z" fill="#f6dc88" stroke="#b89838" stroke-width=".8"/><path d="M10 28 V19 Q10 16 13 16 H25 Q28 16 28 19 V28" fill="#8ecff0" stroke="#4a8ab8" stroke-width="1"/><rect x="14" y="21" width="10" height="7" fill="#f6dc88"/></svg>
<svg style="left:134px;top:736px" width="30" height="26" viewBox="0 0 30 26"><rect x="6" y="1" width="20" height="23" fill="#9ed0f0" stroke="#5a9ac8"/><rect x="3" y="2" width="20" height="23" fill="#b6ddf6" stroke="#5a9ac8"/><circle cx="13" cy="13.5" r="8" fill="#f07820" stroke="#c05010"/><path d="M10 9 L18 13.5 L10 18 Z" fill="#fff"/></svg>
<svg style="left:196px;top:733px" width="34" height="33" viewBox="0 0 34 33"><rect x="14" y="2" width="18" height="16" fill="#2a4aa0" stroke="#c0c8d0" stroke-width="1.5"/><path d="M22 24 H28" stroke="#bbb" stroke-width="2"/><circle cx="13" cy="10" r="5" fill="#e8b878"/><path d="M9 7 Q13 3 17 7" fill="#6a4a2a"/><path d="M3 28 Q4 18 13 17 Q21 18 22 28 Z" fill="#a8d8f0"/><path d="M1 24 Q10 32 30 12" fill="none" stroke="#e8b020" stroke-width="2.5"/></svg>
<svg style="left:258px;top:733px" width="34" height="34" viewBox="0 0 34 34"><circle cx="17" cy="17" r="15" fill="#db4437"/><path d="M17 17 L4.2 9.5 A15 15 0 0 1 29.8 9.5 Z" fill="#db4437"/><path d="M17 17 L29.8 9.5 A15 15 0 0 1 17 32 Z" fill="#fbbc05"/><path d="M17 17 L17 32 A15 15 0 0 1 4.2 9.5 Z" fill="#0f9d58"/><circle cx="17" cy="17" r="7" fill="#fff"/><circle cx="17" cy="17" r="5.4" fill="#4285f4"/></svg>
<svg style="left:320px;top:733px" width="36" height="34" viewBox="0 0 36 34"><defs><radialGradient id="gg320" cx=".5" cy=".4" r=".6"><stop offset="0" stop-color="#f4f0ec"/><stop offset="1" stop-color="#a8a09a"/></radialGradient></defs><circle cx="17" cy="17" r="15" fill="#8a8680"/><circle cx="17" cy="17" r="13" fill="url(#gg320)" stroke="#fff" stroke-width=".8"/><path d="M11 8 L21 22" stroke="#c02020" stroke-width="1.6"/><path d="M8 12 A10 10 0 0 1 26 12" fill="none" stroke="#c0b8b0" stroke-width="2" stroke-dasharray="1 2"/></svg>
<svg style="left:629px;top:733px" width="36" height="34" viewBox="0 0 36 34"><defs><radialGradient id="gg629" cx=".5" cy=".4" r=".6"><stop offset="0" stop-color="#f4f0ec"/><stop offset="1" stop-color="#a8a09a"/></radialGradient></defs><circle cx="17" cy="17" r="15" fill="#8a8680"/><circle cx="17" cy="17" r="13" fill="url(#gg629)" stroke="#fff" stroke-width=".8"/><path d="M11 8 L21 22" stroke="#c02020" stroke-width="1.6"/><path d="M8 12 A10 10 0 0 1 26 12" fill="none" stroke="#c0b8b0" stroke-width="2" stroke-dasharray="1 2"/><path d="M22 20 L28 18 L34 20 V25 Q34 30 28 33 Q22 30 22 25 Z" fill="#3a7ad8" stroke="#fff" stroke-width=".8"/><path d="M28 18 V33 M22 25 H34" stroke="#f0c020" stroke-width="2"/></svg>
<svg style="left:382px;top:733px" width="33" height="33" viewBox="0 0 33 33"><g fill="#dde6f0" stroke="#7a8aa0" stroke-width=".8"><path d="M13 2 H17 L18 6 L21 7 L24 4 L27 7 L24 10 L25 13 L29 14 V18 L25 19 L24 22 L27 25 L24 28 L21 25 L18 26 L17 30 H13 L12 26 L9 25 L6 28 L3 25 L6 22 L5 19 L1 18 V14 L5 13 L6 10 L3 7 L6 4 L9 7 L12 6 Z"/></g><circle cx="15" cy="16" r="5" fill="#1e2a36"/><g transform="translate(17 17) scale(.5)"><path d="M13 2 H17 L18 6 L21 7 L24 4 L27 7 L24 10 L25 13 L29 14 V18 L25 19 L24 22 L27 25 L24 28 L21 25 L18 26 L17 30 H13 L12 26 L9 25 L6 28 L3 25 L6 22 L5 19 L1 18 V14 L5 13 L6 10 L3 7 L6 4 L9 7 L12 6 Z" fill="#dde6f0" stroke="#7a8aa0"/><circle cx="15" cy="16" r="5" fill="#1e2a36"/></g></svg>
<svg style="left:444px;top:734px" width="34" height="32" viewBox="0 0 34 32"><rect x="1" y="2" width="32" height="22" fill="#2a8ad8" stroke="#8ac8f0"/><circle cx="9" cy="10" r="4" fill="none" stroke="#fff" stroke-width="1.5"/><path d="M9 6 A4 4 0 0 1 13 10 H9 Z" fill="#f0a020"/><rect x="17" y="6" width="12" height="4" fill="none" stroke="#fff"/><rect x="17" y="13" width="12" height="4" fill="none" stroke="#fff"/><circle cx="7" cy="19" r="1" fill="#fff"/><ellipse cx="17" cy="27" rx="8" ry="4" fill="#d8d8d8"/></svg>
<svg style="left:506px;top:734px" width="34" height="32" viewBox="0 0 34 32"><rect x="3" y="1" width="28" height="30" fill="#c81a1a" stroke="#801010"/><path d="M9 25 Q14 18 17 6 Q18 3 19 6 Q20 18 27 22 Q22 20 9 25 Z" fill="none" stroke="#fff" stroke-width="1.6"/></svg>
<svg style="left:566px;top:733px" width="36" height="34" viewBox="0 0 36 34"><path d="M6 2 H26 L33 9 V32 H6 Z" fill="#e8f4e0" stroke="#4a9a3a" stroke-width="1.2"/><g stroke="#3a8a2a" stroke-width="1.2"><path d="M6 14 H33 M6 20 H33 M6 26 H33 M16 8 V32 M24 8 V32"/></g><rect x="2" y="6" width="16" height="14" fill="#2a8a3a"/><path d="M5 9 L15 18 M15 9 L5 18" stroke="#fff" stroke-width="2.4"/></svg>
<div class="a" style="left:689px;top:730px;width:38px;height:37px;background:#2c3238"></div>
<svg style="left:697px;top:737px" width="20" height="24" viewBox="0 0 20 24"><path d="M5 10 V6 A5 5 0 0 1 15 6 V10" fill="none" stroke="#e8e8e8" stroke-width="1.6"/><rect x="3" y="10" width="14" height="12" rx="1.5" fill="none" stroke="#e8e8e8" stroke-width="1.6"/><circle cx="10" cy="16" r="1.2" fill="#e8e8e8"/></svg>
<svg style="left:751px;top:733px" width="36" height="34" viewBox="0 0 36 34"><path d="M4 6 L24 2 V32 L4 28 Z" fill="#2a5ab8" stroke="#1a3a88"/><path d="M12 6 H33 V30 H12 Z" fill="#fff" stroke="#8aa0c8"/><path d="M16 10 H30 M16 14 H30 M16 18 H30 M16 22 H30 M16 26 H30" stroke="#2a5ab8" stroke-width="2"/><path d="M7 11 L9.5 22 L12 14 L14.5 22 L17 11" fill="none" stroke="#fff" stroke-width="1.8"/></svg>
<svg style="left:817px;top:733px" width="32" height="34" viewBox="0 0 32 34"><rect x="4" y="1" width="24" height="32" rx="2" fill="#a8d4f0" stroke="#5a8ab0"/><rect x="7" y="4" width="18" height="7" fill="#eef8ff" stroke="#5a8ab0" stroke-width=".6"/><g fill="#fff" stroke="#6a9ac0" stroke-width=".5"><rect x="7" y="14" width="4" height="3"/><rect x="12" y="14" width="4" height="3"/><rect x="17" y="14" width="4" height="3"/><rect x="7" y="19" width="4" height="3"/><rect x="12" y="19" width="4" height="3"/><rect x="17" y="19" width="4" height="3"/><rect x="7" y="24" width="4" height="3"/><rect x="12" y="24" width="4" height="3"/><rect x="17" y="24" width="4" height="3"/></g><rect x="22" y="14" width="3" height="13" fill="#f0a020"/></svg>
<svg style="left:1179px;top:744px" width="9" height="6"><path d="M0 5 L4.5 0 L9 5 Z" fill="#e8e8e8"/></svg>
<svg style="left:1199px;top:738px" width="16" height="19" viewBox="0 0 16 19"><path d="M2 1 V18" stroke="#fff" stroke-width="1.5"/><path d="M2 2 H10 L9 6 L12 9 H2 Z" fill="#fff"/><circle cx="11" cy="13" r="4.5" fill="#e03030" stroke="#fff" stroke-width=".8"/><path d="M9 11 L13 15 M13 11 L9 15" stroke="#fff" stroke-width="1.3"/></svg>
<svg style="left:1224px;top:737px" width="18" height="19" viewBox="0 0 18 19"><rect x="3" y="2" width="12" height="15" fill="#5aa8e8" stroke="#d0e0f0"/><rect x="5" y="5" width="4" height="4" fill="#f0b020"/><ellipse cx="9" cy="9" rx="9" ry="4" fill="none" stroke="#f0a020" stroke-width="1.4" transform="rotate(-25 9 9)"/></svg>
<svg style="left:1249px;top:738px" width="17" height="18" viewBox="0 0 17 18"><path d="M3 1 V6 M6 1 V6 M2 6 H7 V9 H2 Z" fill="#fff" stroke="#fff" stroke-width="1"/><path d="M4.5 9 V16 H14" stroke="#fff" stroke-width="1.4" fill="none"/><rect x="8" y="7" width="8" height="9" fill="none" stroke="#ddd" stroke-width=".8"/><path d="M9 10 L15 16 M15 10 L9 16" stroke="#e02020" stroke-width="1.6"/></svg>
<span id="t137" class="t" style="transform:scaleX(1.0323);left:1294px;top:734.84px;font-size:12px;line-height:12px;color:#fff;font-weight:normal;font-family:'Liberation Sans',sans-serif;">18:48</span>
<span id="t138" class="t" style="transform:scaleX(1.0156);left:1280px;top:751.64px;font-size:12px;line-height:12px;color:#fff;font-weight:normal;font-family:'Liberation Sans',sans-serif;">15/05/2025</span>
<div class="a" style="left:1354px;top:729px;width:12px;height:39px;background:linear-gradient(90deg,#444d57,#202830);border-left:1px solid #6a7684"></div>
<svg style="left:0;top:0" width="150" height="460" viewBox="0 0 150 460" shape-rendering="crispEdges"><g fill="none" stroke="#111" stroke-width="1"><path d="M38 193.5 H45"/><path d="M56 203.5 H69"/><rect x="63.5" y="208.5" width="59" height="19"/><path d="M73 209.5 H86 M105 209.5 H114 M94.5 212 V214 M94.5 217 V219 M94.5 222 V224 M56 227.5 H139 M56 226 H92 M70 222 H83 M122.5 220 V226 M126 225 H135 M128 229 H139"/><rect x="63.5" y="239.5" width="40" height="18"/><rect x="94.5" y="250.5" width="9" height="7"/><path d="M103 253.5 H122 M103 256.5 H118 M58 247 H63 M58 252 H63"/><rect x="63.5" y="266.5" width="59" height="22"/><rect x="54.5" y="278.5" width="9" height="10"/><path d="M54 283.5 H90 M70 287 H88 M95 281 V285 M122 270 H128 M122 281 H129 M73 267.5 H90 M103 267.5 H110 M112 267.5 H121"/><rect x="73.5" y="302.5" width="57" height="21"/><path d="M103.5 302 V315 M111.5 315.5 H131 M111.5 315 V323 M63 319.5 H73 M73 314.5 H78 M103 307.5 H108 M131 310 H135 M131 321 H135"/><rect x="73.5" y="386.5" width="57" height="21"/><path d="M103.5 386 V400 M111.5 400.5 H131 M111.5 400 V407 M70 397 H94 M70 405 H94 M94 401.5 H103"/><rect x="73.5" y="419.5" width="57" height="21"/><path d="M103.5 419 V432 M111.5 431.5 H131 M111.5 432 V440 M86.5 435.5 H94 V440.5 M70 425 H73 M70 429 H73 M131 428 H135 M131 436 H135"/></g><g fill="#777"><rect x="38" y="203" width="14" height="1"/><rect x="38" y="236" width="42" height="1"/><rect x="38" y="263" width="11" height="1"/><rect x="38" y="293" width="14" height="1"/><rect x="65" y="293" width="11" height="1"/><rect x="96" y="293" width="6" height="1"/><rect x="38" y="297" width="9" height="1"/><rect x="65" y="297" width="14" height="1"/><rect x="38" y="382" width="9" height="1"/><rect x="66" y="382" width="13" height="1"/><rect x="38" y="414" width="7" height="1"/><rect x="66" y="414" width="14" height="1"/><rect x="38" y="446" width="53" height="1" fill="#333"/><rect x="78" y="215" width="6" height="1"/><rect x="101" y="215" width="6" height="1"/><rect x="90" y="245" width="14" height="1"/><rect x="82" y="272" width="8" height="1"/><rect x="107" y="272" width="6" height="1"/></g></svg>
</body></html>
